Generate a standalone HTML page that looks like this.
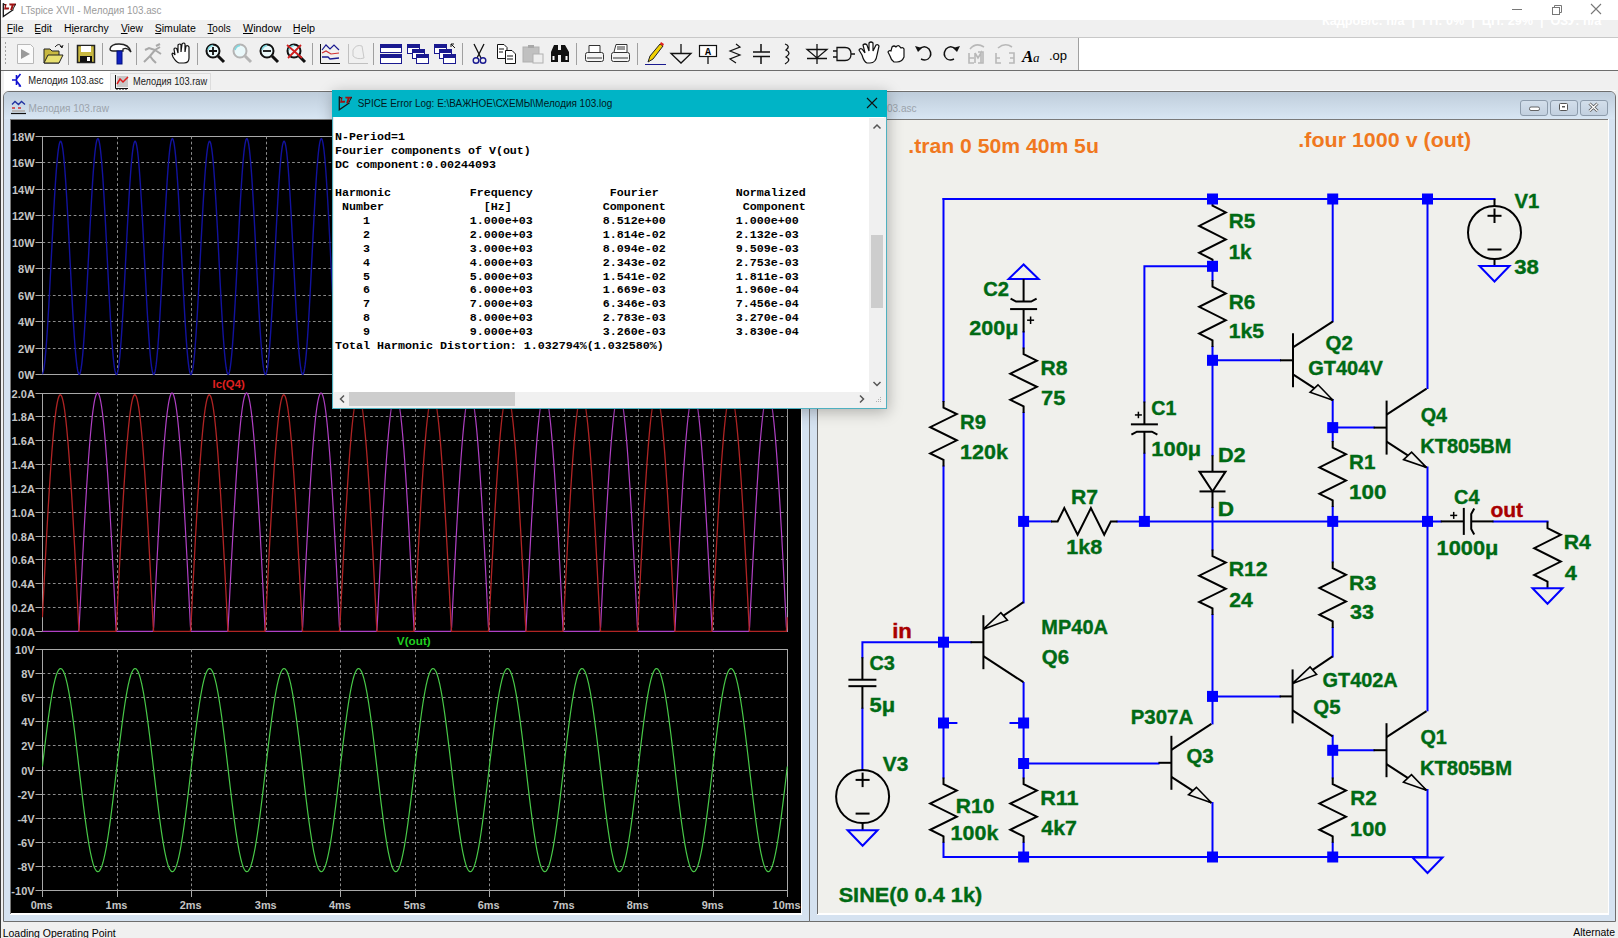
<!DOCTYPE html><html><head><meta charset="utf-8"><style>
html,body{margin:0;padding:0;}
body{width:1618px;height:938px;overflow:hidden;position:relative;background:#f0f0f0;font-family:"Liberation Sans", sans-serif;}
.a{position:absolute;}
svg{position:absolute;left:0;top:0;overflow:visible;}
</style></head><body>
<div class="a" style="left:0;top:0;width:1618px;height:20px;background:#fff"></div><div class="a" style="left:0;top:20px;width:1618px;height:18px;background:#f0f0f0"></div><div class="a" style="left:0;top:37px;width:1618px;height:1px;background:#c8c8c8"></div><svg width="1618" height="938" style="left:0;top:0;"><text transform="translate(20.65,13.85) scale(0.8550,1)" font-family="Liberation Sans" font-size="11.5" font-weight="normal" fill="#9a9a9a" >LTspice XVII - Мелодия 103.asc</text><g transform="translate(3,3) scale(1.0)"><path d="M0.3 0.3 V13.5 L10.5 6.5" fill="none" stroke="#151515" stroke-width="1.3"/><path d="M1.2 1 H3.6 L2.9 4.6 H6.2 L5.7 6.5 H1 L1.8 3.3 Z" fill="#a01010"/><path d="M6.2 0.6 H13 L12.5 2.4 H10.7 L9.2 7 H7.1 L8.6 2.4 H6.6 Z" fill="#a01010"/><path d="M0.5 0.5 L2.5 2.2 M10 6 L12.6 1" stroke="#151515" stroke-width="1"/></g><line x1="1512" y1="9.5" x2="1522" y2="9.5" stroke="#777" stroke-width="1"/>
<rect x="1552.5" y="7.5" width="7" height="7" fill="none" stroke="#777"/><path d="M1554.5 7.5 V5.5 H1561.5 V12.5 H1559.5" fill="none" stroke="#777"/>
<path d="M1591 4 L1601 14 M1601 4 L1591 14" stroke="#777" stroke-width="1.1"/><text transform="translate(1321.95,24.50) scale(0.9721,1)" font-family="Liberation Sans" font-size="13" font-weight="bold" fill="#ffffff" xml:space="preserve">Кадров/с: n/a  |  ГП: 0%  |  ЦП: 29%  |  ОЗУ: n/a</text><text transform="translate(6.67,31.65) scale(0.9466,1)" font-family="Liberation Sans" font-size="11" font-weight="normal" fill="#000" >File</text><rect x="7.5" y="33" width="5.1" height="1" fill="#000"/><text transform="translate(34.28,31.65) scale(0.9333,1)" font-family="Liberation Sans" font-size="11" font-weight="normal" fill="#000" >Edit</text><rect x="35.1" y="33" width="5.6" height="1" fill="#000"/><text transform="translate(63.97,31.65) scale(0.9514,1)" font-family="Liberation Sans" font-size="11" font-weight="normal" fill="#000" >Hierarchy</text><rect x="72.3" y="33" width="2.0" height="1" fill="#000"/><text transform="translate(120.90,31.65) scale(0.9263,1)" font-family="Liberation Sans" font-size="11" font-weight="normal" fill="#000" >View</text><rect x="120.9" y="33" width="6.7" height="1" fill="#000"/><text transform="translate(154.72,31.65) scale(0.9605,1)" font-family="Liberation Sans" font-size="11" font-weight="normal" fill="#000" >Simulate</text><rect x="155.2" y="33" width="6.1" height="1" fill="#000"/><text transform="translate(207.37,31.65) scale(0.9080,1)" font-family="Liberation Sans" font-size="11" font-weight="normal" fill="#000" >Tools</text><rect x="207.6" y="33" width="5.7" height="1" fill="#000"/><text transform="translate(243.00,31.65) scale(0.9815,1)" font-family="Liberation Sans" font-size="11" font-weight="normal" fill="#000" >Window</text><rect x="243.0" y="33" width="10.2" height="1" fill="#000"/><text transform="translate(292.84,31.65) scale(0.9871,1)" font-family="Liberation Sans" font-size="11" font-weight="normal" fill="#000" >Help</text><rect x="293.7" y="33" width="6.2" height="1" fill="#000"/></svg><div class="a" style="left:0;top:38px;width:1618px;height:32px;background:#f0f0f0"></div><div class="a" style="left:1079px;top:38px;width:539px;height:32px;background:#fff"></div><div class="a" style="left:1078px;top:38px;width:1px;height:32px;background:#a0a0a0"></div><div class="a" style="left:0;top:70px;width:1618px;height:1px;background:#6d6d6d"></div><svg width="1618" height="938" style="left:0;top:0;"><rect x="5" y="42" width="1" height="2" fill="#a0a0a0"/><rect x="5" y="46" width="1" height="2" fill="#a0a0a0"/><rect x="5" y="50" width="1" height="2" fill="#a0a0a0"/><rect x="5" y="54" width="1" height="2" fill="#a0a0a0"/><rect x="5" y="58" width="1" height="2" fill="#a0a0a0"/><rect x="5" y="62" width="1" height="2" fill="#a0a0a0"/><line x1="68.5" y1="43" x2="68.5" y2="65" stroke="#a0a0a0" stroke-width="1"/><line x1="102.5" y1="43" x2="102.5" y2="65" stroke="#a0a0a0" stroke-width="1"/><line x1="136.5" y1="43" x2="136.5" y2="65" stroke="#a0a0a0" stroke-width="1"/><line x1="197.5" y1="43" x2="197.5" y2="65" stroke="#a0a0a0" stroke-width="1"/><line x1="312.5" y1="43" x2="312.5" y2="65" stroke="#a0a0a0" stroke-width="1"/><line x1="373.5" y1="43" x2="373.5" y2="65" stroke="#a0a0a0" stroke-width="1"/><line x1="462.5" y1="43" x2="462.5" y2="65" stroke="#a0a0a0" stroke-width="1"/><line x1="576.5" y1="43" x2="576.5" y2="65" stroke="#a0a0a0" stroke-width="1"/><line x1="637.5" y1="43" x2="637.5" y2="65" stroke="#a0a0a0" stroke-width="1"/><path d="M17.5 44.5 H30.5 L33.5 47.5 V63.5 H17.5 Z" fill="#fafafa" stroke="#b8b8b8"/><path d="M21 49 L30 54 L21 59 Z" fill="#9a9a9a"/><path d="M44 49 H50 L52 51 H59 V63 H44 Z" fill="#c8b840" stroke="#222" stroke-width="1"/><path d="M44 63 L48 55 H63 L59 63 Z" fill="#e8e070" stroke="#222"/><path d="M55 47 Q59 42 62 47" fill="none" stroke="#222"/><path d="M60 46 L62 48 L63 45" fill="none" stroke="#222"/><rect x="77.5" y="45.5" width="17" height="17" fill="#c8b840" stroke="#222" stroke-width="1.5"/><rect x="81" y="46" width="10" height="6" fill="#fff"/><rect x="80" y="56" width="12" height="6" fill="#111"/><rect x="87" y="57" width="3" height="4" fill="#fff"/><path d="M110 49 Q111 44 119 44 Q129 44 131 52 Q127 47 123 49 L123 51 H113 Q110 51 110 49 Z" fill="#fff" stroke="#222" stroke-width="1.3"/><rect x="117" y="51" width="5" height="13" fill="#1020c0" stroke="#001080"/><path d="M144 62 L150 56 L153 60 L156 63 M150 56 L155 50 L160 47 M155 50 L149 48 L145 50 M155 50 L161 54 M156 46 L160 44" fill="none" stroke="#a8a8a8" stroke-width="2"/><path d="M175 55 L174 49 Q175 47 177 49 L178 53 L178 45 Q180 43 181 45 L181 52 L182 44 Q184 42 185 44 L185 52 L186 46 Q188 45 189 47 L189 58 Q189 63 184 63 L179 63 Q176 62 173 57 L172 54 Q173 52 175 55 Z" fill="#fff" stroke="#111" stroke-width="1.2"/><circle cx="213" cy="51" r="6.5" fill="#eaf8fa" stroke="#111" stroke-width="2"/><path d="M208 50 Q209 46 213 45.5" fill="none" stroke="#7fd8e0" stroke-width="1.5"/><line x1="218" y1="56" x2="224" y2="62" stroke="#111" stroke-width="3"/><path d="M209 51 H217 M213 47 V55" stroke="#111" stroke-width="1.8"/><circle cx="240" cy="51" r="6.5" fill="#eaf8fa" stroke="#b4b4b4" stroke-width="2"/><path d="M235 50 Q236 46 240 45.5" fill="none" stroke="#7fd8e0" stroke-width="1.5"/><line x1="245" y1="56" x2="251" y2="62" stroke="#b4b4b4" stroke-width="3"/><circle cx="267" cy="51" r="6.5" fill="#eaf8fa" stroke="#111" stroke-width="2"/><path d="M262 50 Q263 46 267 45.5" fill="none" stroke="#7fd8e0" stroke-width="1.5"/><line x1="272" y1="56" x2="278" y2="62" stroke="#111" stroke-width="3"/><path d="M263 51 H271" stroke="#111" stroke-width="1.8"/><circle cx="294" cy="51" r="6.5" fill="#eaf8fa" stroke="#111" stroke-width="2"/><path d="M289 50 Q290 46 294 45.5" fill="none" stroke="#7fd8e0" stroke-width="1.5"/><line x1="299" y1="56" x2="305" y2="62" stroke="#111" stroke-width="3"/><path d="M287 45 L302 58 M301 45 L288 58" stroke="#d02020" stroke-width="1.8"/><path d="M320.5 44 V63.5 H340" fill="none" stroke="#111"/><path d="M322 50 L326 45 L330 49 L334 45 L339 50" fill="none" stroke="#1a1a90" stroke-width="1.2"/><path d="M322 53 L326 51 L331 54 L339 53" fill="none" stroke="#d03030" stroke-width="1.2"/><path d="M322 57 L328 57 L330 59 L339 58" fill="none" stroke="#1a1a90" stroke-width="1.3"/><path d="M348.5 44 V63.5 H368" fill="none" stroke="#c0c0c0"/><path d="M353 50 Q356 44 362 46 L364 58 Q357 60 353 56 Z" fill="none" stroke="#c8c8c8"/><rect x="380.5" y="44.5" width="21" height="8" fill="#fff" stroke="#1a1a90"/><rect x="381" y="45" width="20" height="3" fill="#1a1a90"/><rect x="380.5" y="54.5" width="21" height="9" fill="#fff" stroke="#1a1a90"/><rect x="381" y="55" width="20" height="3" fill="#1a1a90"/><rect x="407.5" y="44.5" width="12" height="9" fill="#fff" stroke="#1a1a90"/><rect x="408" y="45" width="11" height="3" fill="#1a1a90"/><rect x="412.5" y="49.5" width="12" height="9" fill="#fff" stroke="#1a1a90"/><rect x="413" y="50" width="11" height="3" fill="#1a1a90"/><rect x="416.5" y="54.5" width="12" height="9" fill="#fff" stroke="#1a1a90"/><rect x="417" y="55" width="11" height="3" fill="#1a1a90"/><rect x="434.5" y="44.5" width="12" height="9" fill="#fff" stroke="#1a1a90"/><rect x="435" y="45" width="11" height="3" fill="#1a1a90"/><rect x="439.5" y="49.5" width="12" height="9" fill="#fff" stroke="#1a1a90"/><rect x="440" y="50" width="11" height="3" fill="#1a1a90"/><rect x="443.5" y="54.5" width="12" height="9" fill="#fff" stroke="#1a1a90"/><rect x="444" y="55" width="11" height="3" fill="#1a1a90"/><path d="M451 44 L455 48 M451 44 V47 M451 44 H454" stroke="#111" fill="none"/><path d="M474 44 L481 58 M484 44 L477 58" stroke="#111" stroke-width="1.3"/><circle cx="476" cy="60.5" r="2.8" fill="none" stroke="#1a1a90" stroke-width="1.4"/><circle cx="483" cy="60.5" r="2.8" fill="none" stroke="#1a1a90" stroke-width="1.4"/><path d="M497.5 44.5 H504 L507 47.5 V58.5 H497.5 Z" fill="#fff" stroke="#111"/><path d="M505.5 50.5 H512 L515.5 54 V63.5 H505.5 Z" fill="#fff" stroke="#111"/><path d="M499 49 H504 M499 52 H503 M507 56 H513 M507 59 H513" stroke="#111"/><rect x="523" y="47" width="16" height="15" fill="#c0c0c0" stroke="#b0b0b0"/><rect x="528" y="45" width="6" height="3" fill="#a8a8a8"/><rect x="533" y="54" width="10" height="9" fill="#eee" stroke="#b0b0b0"/><path d="M551 62 V52 L554 45 H558 V62 Z M561 62 V45 H565 L569 52 V62 Z" fill="#111"/><rect x="557" y="50" width="5" height="5" fill="#111"/><rect x="552.5" y="56" width="2" height="4" fill="#fff"/><rect x="565.5" y="56" width="2" height="4" fill="#fff"/><rect x="585.5" y="52.5" width="18" height="9" rx="2" fill="#f4f4f4" stroke="#333"/><path d="M589 52 V45.5 H600 V52" fill="#fff" stroke="#333"/><path d="M587 58 H602" stroke="#333"/><rect x="611.5" y="52.5" width="18" height="9" rx="2" fill="#f4f4f4" stroke="#333"/><path d="M614 52 L616 44.5 H627 L627 52" fill="#fff" stroke="#333"/><path d="M617 47 H625 M617 49 H625 M613 58 H628" stroke="#333"/><path d="M648 62 L650 56 L660 44 L663 46 L653 59 Z" fill="#f0d000" stroke="#222"/><path d="M660 44 L663 46 L664 44 L661 42 Z" fill="#e02020"/><line x1="645" y1="64.5" x2="666" y2="64.5" stroke="#1a1a90"/><path d="M681 44 V53 M671 53.5 H691 L681 63 Z" fill="none" stroke="#111" stroke-width="1.3"/><rect x="699.5" y="45.5" width="17" height="11" fill="#fff" stroke="#111" stroke-width="1.2"/><line x1="708" y1="57" x2="708" y2="64" stroke="#111" stroke-width="1.3"/><text x="708" y="55" font-size="10" font-weight="bold" text-anchor="middle" font-family="Liberation Mono">A</text><path d="M736 44 L740 47 L730 51 L740 55 L730 59 L736 63" fill="none" stroke="#111" stroke-width="1.2"/><path d="M761 44 V52 M753 52 H770 M753 56.5 H770 M761 57 V64" fill="none" stroke="#111" stroke-width="1.5"/><path d="M785 44 Q791 46 786 50 Q792 53 786 57 Q792 60 785 64" fill="none" stroke="#111" stroke-width="1.3"/><path d="M817 44 V64 M807 49.5 H827 L817 58 Z M807 58.5 H827" fill="none" stroke="#111" stroke-width="1.3"/><path d="M837 47.5 H845 Q851 47.5 851 54 Q851 60.5 845 60.5 H837 Z M833 51 H837 M833 57 H837 M851 54 H855" fill="none" stroke="#111" stroke-width="1.3"/><path d="M862 55 L859 50 Q860 48 862 49 L865 53 L863 45 Q865 43 867 45 L869 51 L869 43 Q871 41 873 43 L873 51 L876 45 Q878 44 879 46 L877 55 Q876 63 870 63 L867 63 Q864 62 862 55 Z" fill="#fff" stroke="#111" stroke-width="1.2"/><path d="M890 56 L888 52 Q889 50 891 51 L892 47 Q894 45 896 47 L897 46 Q899 45 900 47 L901 48 Q903 47 904 49 L904 57 Q902 62 897 62 L894 62 Q891 60 890 56 Z" fill="#fff" stroke="#111" stroke-width="1.2"/><path d="M918 50 Q924 44 929 49 Q933 55 928 59 Q925 61 921 59" fill="none" stroke="#111" stroke-width="1.4"/><path d="M915 46 L918 52 L922 48 Z" fill="#111"/><path d="M957 50 Q951 44 946 49 Q942 55 947 59 Q950 61 954 59" fill="none" stroke="#111" stroke-width="1.4"/><path d="M960 46 L957 52 L953 48 Z" fill="#111"/><path d="M969 53 V63 H974 M969 58 H974 M975 53 V63 M975 53 L978 58 L981 53 V63 M978 52 H983 V63 H978 M970 49 Q976 42 984 47" fill="none" stroke="#b8b8b8" stroke-width="1.6"/><path d="M996 53 V63 H1001 M996 58 H1000 M1009 53 H1014 V63 H1009 M1010 58 H1014 M998 48 Q1005 42 1012 47" fill="none" stroke="#b8b8b8" stroke-width="1.6"/><text x="1022" y="62" font-size="17" font-style="italic" font-weight="bold" font-family="Liberation Serif">A</text><text x="1033" y="62" font-size="13" font-style="italic" font-family="Liberation Serif">a</text><text x="1049" y="60" font-size="13" font-family="Liberation Sans">.op</text></svg><div class="a" style="left:4px;top:71px;width:106px;height:20px;background:#fff"></div><div class="a" style="left:110px;top:73px;width:101px;height:18px;background:#f2f2f2;border:1px solid #dcdcdc;border-bottom:none;box-sizing:border-box"></div><svg width="1618" height="938" style="left:0;top:0;"><text transform="translate(28.35,84.30) scale(0.8590,1)" font-family="Liberation Sans" font-size="11" font-weight="normal" fill="#1a1a1a" >Мелодия 103.asc</text><text transform="translate(132.96,85.20) scale(0.8412,1)" font-family="Liberation Sans" font-size="11" font-weight="normal" fill="#1a1a1a" >Мелодия 103.raw</text><path d="M12 80 H16 M16.5 75 L16.5 85 M16.5 79 L20.5 74 M16.5 81 L20.5 86" fill="none" stroke="#1010d0" stroke-width="1.6"/><path d="M19 84 L21.5 87 L18.5 86.5 Z" fill="#1010d0"/>
<path d="M115.5 75 V88.5 H128" fill="none" stroke="#111"/><rect x="117" y="76" width="11" height="11" fill="#c8c8c8"/><path d="M117 84 L120 79 L123 82 L128 77" fill="none" stroke="#e02020" stroke-width="1.5"/>
<path d="M117 90 V88 M120 90 V88 M123 90 V88 M126 90 V88" stroke="#111"/></svg><div class="a" style="left:809px;top:91px;width:807px;height:831px;background:#d5e2f0;border:1px solid #6e6e6e;box-sizing:border-box;border-radius:6px 6px 0 0"></div><div class="a" style="left:810px;top:92px;width:805px;height:27px;background:linear-gradient(#bfcddb,#d8e6f3);border-radius:5px 5px 0 0"></div><div class="a" style="left:3px;top:91px;width:807px;height:831px;background:#d5e2f0;border:1px solid #6e6e6e;box-sizing:border-box;border-radius:6px 6px 0 0"></div><div class="a" style="left:4px;top:92px;width:805px;height:27px;background:linear-gradient(#bfcddb,#d8e6f3);border-radius:5px 5px 0 0"></div><div class="a" style="left:4px;top:90px;width:1612px;height:1px;background:#fafafa"></div><svg width="1618" height="938" style="left:0;top:0;"><text transform="translate(28.54,111.70) scale(0.8722,1)" font-family="Liberation Sans" font-size="11.5" font-weight="normal" fill="#9ba3ab" >Мелодия 103.raw</text><text transform="translate(836.54,111.70) scale(0.8741,1)" font-family="Liberation Sans" font-size="11.5" font-weight="normal" fill="#9ba3ab" >Мелодия 103.asc</text><path d="M12 104.5 L15 101.5 L18.5 104.5 L21.5 101.5 L25 104.5" fill="none" stroke="#2030a0" stroke-width="1.3"/>
<path d="M12 108 H15 M18 108 H21" stroke="#d03030" stroke-width="1.3"/><rect x="12" y="110" width="13" height="2" fill="#b8b8b8"/><line x1="11" y1="113.5" x2="26" y2="113.5" stroke="#111" stroke-width="1.2"/></svg><div class="a" style="left:10px;top:119px;width:792px;height:796px;background:#fff"></div><div class="a" style="left:10px;top:119px;width:792px;height:1px;background:#7a7a7a"></div><div class="a" style="left:10px;top:119px;width:1px;height:795px;background:#7a7a7a"></div><div class="a" style="left:11px;top:120px;width:790px;height:793px;background:#000"></div><div class="a" style="left:817px;top:119px;width:792px;height:796px;background:#fff"></div><div class="a" style="left:817px;top:119px;width:791px;height:1px;background:#7a7a7a"></div><div class="a" style="left:817px;top:119px;width:1px;height:795px;background:#6a6a6a"></div><div class="a" style="left:818px;top:120px;width:790px;height:793px;background:#f0f0ec"></div><div class="a" style="left:1520px;top:100px;width:28px;height:16px;border:1px solid #8d9cac;border-radius:3px;background:linear-gradient(#d3dfeb,#c2d0df);box-sizing:border-box"></div><div class="a" style="left:1550px;top:100px;width:28px;height:16px;border:1px solid #8d9cac;border-radius:3px;background:linear-gradient(#d3dfeb,#c2d0df);box-sizing:border-box"></div><div class="a" style="left:1580px;top:100px;width:28px;height:16px;border:1px solid #8d9cac;border-radius:3px;background:linear-gradient(#d3dfeb,#c2d0df);box-sizing:border-box"></div><svg width="1618" height="938" style="left:0;top:0;"><rect x="1529.5" y="107" width="10" height="3.5" rx="1.5" fill="#fff" stroke="#555" stroke-width="0.9"/>
<rect x="1559.5" y="103.5" width="8" height="7" rx="1" fill="#fff" stroke="#555" stroke-width="1"/><rect x="1562" y="106" width="3" height="1.5" fill="#555"/>
<path d="M1589.5 103.5 L1597.5 111 M1597.5 103.5 L1589.5 111" stroke="#555" stroke-width="3"/><path d="M1589.5 103.5 L1597.5 111 M1597.5 103.5 L1589.5 111" stroke="#fff" stroke-width="1.3"/></svg><div class="a" style="left:0;top:922px;width:1618px;height:16px;background:#f0f0f0"></div><svg width="1618" height="938" style="left:0;top:0;"><text transform="translate(2.67,936.80) scale(0.9529,1)" font-family="Liberation Sans" font-size="11" font-weight="normal" fill="#000" >Loading Operating Point</text><text transform="translate(1573.30,936.30) scale(0.9471,1)" font-family="Liberation Sans" font-size="11" font-weight="normal" fill="#000" >Alternate</text></svg><svg width="1618" height="938" style="left:0;top:0;"><rect x="42.5" y="136.5" width="745.0" height="238.0" fill="none" stroke="#a8a8a8" stroke-width="1"/><line x1="42.5" y1="162.5" x2="787.5" y2="162.5" stroke="#8c8c8c" stroke-width="1" stroke-dasharray="2.7,2.5"/><line x1="42.5" y1="189.5" x2="787.5" y2="189.5" stroke="#8c8c8c" stroke-width="1" stroke-dasharray="2.7,2.5"/><line x1="42.5" y1="215.5" x2="787.5" y2="215.5" stroke="#8c8c8c" stroke-width="1" stroke-dasharray="2.7,2.5"/><line x1="42.5" y1="242.5" x2="787.5" y2="242.5" stroke="#8c8c8c" stroke-width="1" stroke-dasharray="2.7,2.5"/><line x1="42.5" y1="268.5" x2="787.5" y2="268.5" stroke="#8c8c8c" stroke-width="1" stroke-dasharray="2.7,2.5"/><line x1="42.5" y1="295.5" x2="787.5" y2="295.5" stroke="#8c8c8c" stroke-width="1" stroke-dasharray="2.7,2.5"/><line x1="42.5" y1="321.5" x2="787.5" y2="321.5" stroke="#8c8c8c" stroke-width="1" stroke-dasharray="2.7,2.5"/><line x1="42.5" y1="348.5" x2="787.5" y2="348.5" stroke="#8c8c8c" stroke-width="1" stroke-dasharray="2.7,2.5"/><line x1="117.5" y1="136.5" x2="117.5" y2="374.5" stroke="#8c8c8c" stroke-width="1" stroke-dasharray="2.7,2.5"/><line x1="191.5" y1="136.5" x2="191.5" y2="374.5" stroke="#8c8c8c" stroke-width="1" stroke-dasharray="2.7,2.5"/><line x1="266.5" y1="136.5" x2="266.5" y2="374.5" stroke="#8c8c8c" stroke-width="1" stroke-dasharray="2.7,2.5"/><line x1="340.5" y1="136.5" x2="340.5" y2="374.5" stroke="#8c8c8c" stroke-width="1" stroke-dasharray="2.7,2.5"/><line x1="415.5" y1="136.5" x2="415.5" y2="374.5" stroke="#8c8c8c" stroke-width="1" stroke-dasharray="2.7,2.5"/><line x1="489.5" y1="136.5" x2="489.5" y2="374.5" stroke="#8c8c8c" stroke-width="1" stroke-dasharray="2.7,2.5"/><line x1="564.5" y1="136.5" x2="564.5" y2="374.5" stroke="#8c8c8c" stroke-width="1" stroke-dasharray="2.7,2.5"/><line x1="638.5" y1="136.5" x2="638.5" y2="374.5" stroke="#8c8c8c" stroke-width="1" stroke-dasharray="2.7,2.5"/><line x1="713.5" y1="136.5" x2="713.5" y2="374.5" stroke="#8c8c8c" stroke-width="1" stroke-dasharray="2.7,2.5"/><line x1="35.5" y1="136.5" x2="42.5" y2="136.5" stroke="#a8a8a8" stroke-width="1"/><text transform="translate(11.92,140.50) scale(0.9600,1)" font-family="Liberation Sans" font-size="11.5" font-weight="bold" fill="#c4c4c4" >18W</text><line x1="35.5" y1="162.5" x2="42.5" y2="162.5" stroke="#a8a8a8" stroke-width="1"/><text transform="translate(11.92,166.50) scale(0.9600,1)" font-family="Liberation Sans" font-size="11.5" font-weight="bold" fill="#c4c4c4" >16W</text><line x1="35.5" y1="189.5" x2="42.5" y2="189.5" stroke="#a8a8a8" stroke-width="1"/><text transform="translate(11.92,193.50) scale(0.9600,1)" font-family="Liberation Sans" font-size="11.5" font-weight="bold" fill="#c4c4c4" >14W</text><line x1="35.5" y1="215.5" x2="42.5" y2="215.5" stroke="#a8a8a8" stroke-width="1"/><text transform="translate(11.92,219.50) scale(0.9600,1)" font-family="Liberation Sans" font-size="11.5" font-weight="bold" fill="#c4c4c4" >12W</text><line x1="35.5" y1="242.5" x2="42.5" y2="242.5" stroke="#a8a8a8" stroke-width="1"/><text transform="translate(11.92,246.50) scale(0.9600,1)" font-family="Liberation Sans" font-size="11.5" font-weight="bold" fill="#c4c4c4" >10W</text><line x1="35.5" y1="268.5" x2="42.5" y2="268.5" stroke="#a8a8a8" stroke-width="1"/><text transform="translate(18.04,272.50) scale(0.9600,1)" font-family="Liberation Sans" font-size="11.5" font-weight="bold" fill="#c4c4c4" >8W</text><line x1="35.5" y1="295.5" x2="42.5" y2="295.5" stroke="#a8a8a8" stroke-width="1"/><text transform="translate(18.04,299.50) scale(0.9600,1)" font-family="Liberation Sans" font-size="11.5" font-weight="bold" fill="#c4c4c4" >6W</text><line x1="35.5" y1="321.5" x2="42.5" y2="321.5" stroke="#a8a8a8" stroke-width="1"/><text transform="translate(18.04,325.50) scale(0.9600,1)" font-family="Liberation Sans" font-size="11.5" font-weight="bold" fill="#c4c4c4" >4W</text><line x1="35.5" y1="348.5" x2="42.5" y2="348.5" stroke="#a8a8a8" stroke-width="1"/><text transform="translate(18.04,352.50) scale(0.9600,1)" font-family="Liberation Sans" font-size="11.5" font-weight="bold" fill="#c4c4c4" >2W</text><line x1="35.5" y1="374.5" x2="42.5" y2="374.5" stroke="#a8a8a8" stroke-width="1"/><text transform="translate(18.04,378.50) scale(0.9600,1)" font-family="Liberation Sans" font-size="11.5" font-weight="bold" fill="#c4c4c4" >0W</text><rect x="42.5" y="393.5" width="745.0" height="238.0" fill="none" stroke="#a8a8a8" stroke-width="1"/><line x1="42.5" y1="416.5" x2="787.5" y2="416.5" stroke="#8c8c8c" stroke-width="1" stroke-dasharray="2.7,2.5"/><line x1="42.5" y1="440.5" x2="787.5" y2="440.5" stroke="#8c8c8c" stroke-width="1" stroke-dasharray="2.7,2.5"/><line x1="42.5" y1="464.5" x2="787.5" y2="464.5" stroke="#8c8c8c" stroke-width="1" stroke-dasharray="2.7,2.5"/><line x1="42.5" y1="488.5" x2="787.5" y2="488.5" stroke="#8c8c8c" stroke-width="1" stroke-dasharray="2.7,2.5"/><line x1="42.5" y1="512.5" x2="787.5" y2="512.5" stroke="#8c8c8c" stroke-width="1" stroke-dasharray="2.7,2.5"/><line x1="42.5" y1="536.5" x2="787.5" y2="536.5" stroke="#8c8c8c" stroke-width="1" stroke-dasharray="2.7,2.5"/><line x1="42.5" y1="559.5" x2="787.5" y2="559.5" stroke="#8c8c8c" stroke-width="1" stroke-dasharray="2.7,2.5"/><line x1="42.5" y1="583.5" x2="787.5" y2="583.5" stroke="#8c8c8c" stroke-width="1" stroke-dasharray="2.7,2.5"/><line x1="42.5" y1="607.5" x2="787.5" y2="607.5" stroke="#8c8c8c" stroke-width="1" stroke-dasharray="2.7,2.5"/><line x1="117.5" y1="393.5" x2="117.5" y2="631.5" stroke="#8c8c8c" stroke-width="1" stroke-dasharray="2.7,2.5"/><line x1="191.5" y1="393.5" x2="191.5" y2="631.5" stroke="#8c8c8c" stroke-width="1" stroke-dasharray="2.7,2.5"/><line x1="266.5" y1="393.5" x2="266.5" y2="631.5" stroke="#8c8c8c" stroke-width="1" stroke-dasharray="2.7,2.5"/><line x1="340.5" y1="393.5" x2="340.5" y2="631.5" stroke="#8c8c8c" stroke-width="1" stroke-dasharray="2.7,2.5"/><line x1="415.5" y1="393.5" x2="415.5" y2="631.5" stroke="#8c8c8c" stroke-width="1" stroke-dasharray="2.7,2.5"/><line x1="489.5" y1="393.5" x2="489.5" y2="631.5" stroke="#8c8c8c" stroke-width="1" stroke-dasharray="2.7,2.5"/><line x1="564.5" y1="393.5" x2="564.5" y2="631.5" stroke="#8c8c8c" stroke-width="1" stroke-dasharray="2.7,2.5"/><line x1="638.5" y1="393.5" x2="638.5" y2="631.5" stroke="#8c8c8c" stroke-width="1" stroke-dasharray="2.7,2.5"/><line x1="713.5" y1="393.5" x2="713.5" y2="631.5" stroke="#8c8c8c" stroke-width="1" stroke-dasharray="2.7,2.5"/><line x1="35.5" y1="393.5" x2="42.5" y2="393.5" stroke="#a8a8a8" stroke-width="1"/><text transform="translate(11.56,397.50) scale(0.9600,1)" font-family="Liberation Sans" font-size="11.5" font-weight="bold" fill="#c4c4c4" >2.0A</text><line x1="35.5" y1="416.5" x2="42.5" y2="416.5" stroke="#a8a8a8" stroke-width="1"/><text transform="translate(11.56,420.50) scale(0.9600,1)" font-family="Liberation Sans" font-size="11.5" font-weight="bold" fill="#c4c4c4" >1.8A</text><line x1="35.5" y1="440.5" x2="42.5" y2="440.5" stroke="#a8a8a8" stroke-width="1"/><text transform="translate(11.56,444.50) scale(0.9600,1)" font-family="Liberation Sans" font-size="11.5" font-weight="bold" fill="#c4c4c4" >1.6A</text><line x1="35.5" y1="464.5" x2="42.5" y2="464.5" stroke="#a8a8a8" stroke-width="1"/><text transform="translate(11.56,468.50) scale(0.9600,1)" font-family="Liberation Sans" font-size="11.5" font-weight="bold" fill="#c4c4c4" >1.4A</text><line x1="35.5" y1="488.5" x2="42.5" y2="488.5" stroke="#a8a8a8" stroke-width="1"/><text transform="translate(11.56,492.50) scale(0.9600,1)" font-family="Liberation Sans" font-size="11.5" font-weight="bold" fill="#c4c4c4" >1.2A</text><line x1="35.5" y1="512.5" x2="42.5" y2="512.5" stroke="#a8a8a8" stroke-width="1"/><text transform="translate(11.56,516.50) scale(0.9600,1)" font-family="Liberation Sans" font-size="11.5" font-weight="bold" fill="#c4c4c4" >1.0A</text><line x1="35.5" y1="536.5" x2="42.5" y2="536.5" stroke="#a8a8a8" stroke-width="1"/><text transform="translate(11.56,540.50) scale(0.9600,1)" font-family="Liberation Sans" font-size="11.5" font-weight="bold" fill="#c4c4c4" >0.8A</text><line x1="35.5" y1="559.5" x2="42.5" y2="559.5" stroke="#a8a8a8" stroke-width="1"/><text transform="translate(11.56,563.50) scale(0.9600,1)" font-family="Liberation Sans" font-size="11.5" font-weight="bold" fill="#c4c4c4" >0.6A</text><line x1="35.5" y1="583.5" x2="42.5" y2="583.5" stroke="#a8a8a8" stroke-width="1"/><text transform="translate(11.56,587.50) scale(0.9600,1)" font-family="Liberation Sans" font-size="11.5" font-weight="bold" fill="#c4c4c4" >0.4A</text><line x1="35.5" y1="607.5" x2="42.5" y2="607.5" stroke="#a8a8a8" stroke-width="1"/><text transform="translate(11.56,611.50) scale(0.9600,1)" font-family="Liberation Sans" font-size="11.5" font-weight="bold" fill="#c4c4c4" >0.2A</text><line x1="35.5" y1="631.5" x2="42.5" y2="631.5" stroke="#a8a8a8" stroke-width="1"/><text transform="translate(11.56,635.50) scale(0.9600,1)" font-family="Liberation Sans" font-size="11.5" font-weight="bold" fill="#c4c4c4" >0.0A</text><rect x="42.5" y="649.5" width="745.0" height="241.0" fill="none" stroke="#a8a8a8" stroke-width="1"/><line x1="42.5" y1="673.5" x2="787.5" y2="673.5" stroke="#8c8c8c" stroke-width="1" stroke-dasharray="2.7,2.5"/><line x1="42.5" y1="697.5" x2="787.5" y2="697.5" stroke="#8c8c8c" stroke-width="1" stroke-dasharray="2.7,2.5"/><line x1="42.5" y1="721.5" x2="787.5" y2="721.5" stroke="#8c8c8c" stroke-width="1" stroke-dasharray="2.7,2.5"/><line x1="42.5" y1="745.5" x2="787.5" y2="745.5" stroke="#8c8c8c" stroke-width="1" stroke-dasharray="2.7,2.5"/><line x1="42.5" y1="770.5" x2="787.5" y2="770.5" stroke="#8c8c8c" stroke-width="1" stroke-dasharray="2.7,2.5"/><line x1="42.5" y1="794.5" x2="787.5" y2="794.5" stroke="#8c8c8c" stroke-width="1" stroke-dasharray="2.7,2.5"/><line x1="42.5" y1="818.5" x2="787.5" y2="818.5" stroke="#8c8c8c" stroke-width="1" stroke-dasharray="2.7,2.5"/><line x1="42.5" y1="842.5" x2="787.5" y2="842.5" stroke="#8c8c8c" stroke-width="1" stroke-dasharray="2.7,2.5"/><line x1="42.5" y1="866.5" x2="787.5" y2="866.5" stroke="#8c8c8c" stroke-width="1" stroke-dasharray="2.7,2.5"/><line x1="117.5" y1="649.5" x2="117.5" y2="890.5" stroke="#8c8c8c" stroke-width="1" stroke-dasharray="2.7,2.5"/><line x1="191.5" y1="649.5" x2="191.5" y2="890.5" stroke="#8c8c8c" stroke-width="1" stroke-dasharray="2.7,2.5"/><line x1="266.5" y1="649.5" x2="266.5" y2="890.5" stroke="#8c8c8c" stroke-width="1" stroke-dasharray="2.7,2.5"/><line x1="340.5" y1="649.5" x2="340.5" y2="890.5" stroke="#8c8c8c" stroke-width="1" stroke-dasharray="2.7,2.5"/><line x1="415.5" y1="649.5" x2="415.5" y2="890.5" stroke="#8c8c8c" stroke-width="1" stroke-dasharray="2.7,2.5"/><line x1="489.5" y1="649.5" x2="489.5" y2="890.5" stroke="#8c8c8c" stroke-width="1" stroke-dasharray="2.7,2.5"/><line x1="564.5" y1="649.5" x2="564.5" y2="890.5" stroke="#8c8c8c" stroke-width="1" stroke-dasharray="2.7,2.5"/><line x1="638.5" y1="649.5" x2="638.5" y2="890.5" stroke="#8c8c8c" stroke-width="1" stroke-dasharray="2.7,2.5"/><line x1="713.5" y1="649.5" x2="713.5" y2="890.5" stroke="#8c8c8c" stroke-width="1" stroke-dasharray="2.7,2.5"/><line x1="35.5" y1="649.5" x2="42.5" y2="649.5" stroke="#a8a8a8" stroke-width="1"/><text transform="translate(15.04,653.50) scale(0.9600,1)" font-family="Liberation Sans" font-size="11.5" font-weight="bold" fill="#c4c4c4" >10V</text><line x1="35.5" y1="673.5" x2="42.5" y2="673.5" stroke="#a8a8a8" stroke-width="1"/><text transform="translate(21.16,677.50) scale(0.9600,1)" font-family="Liberation Sans" font-size="11.5" font-weight="bold" fill="#c4c4c4" >8V</text><line x1="35.5" y1="697.5" x2="42.5" y2="697.5" stroke="#a8a8a8" stroke-width="1"/><text transform="translate(21.16,701.50) scale(0.9600,1)" font-family="Liberation Sans" font-size="11.5" font-weight="bold" fill="#c4c4c4" >6V</text><line x1="35.5" y1="721.5" x2="42.5" y2="721.5" stroke="#a8a8a8" stroke-width="1"/><text transform="translate(21.16,725.50) scale(0.9600,1)" font-family="Liberation Sans" font-size="11.5" font-weight="bold" fill="#c4c4c4" >4V</text><line x1="35.5" y1="745.5" x2="42.5" y2="745.5" stroke="#a8a8a8" stroke-width="1"/><text transform="translate(21.16,749.50) scale(0.9600,1)" font-family="Liberation Sans" font-size="11.5" font-weight="bold" fill="#c4c4c4" >2V</text><line x1="35.5" y1="770.5" x2="42.5" y2="770.5" stroke="#a8a8a8" stroke-width="1"/><text transform="translate(21.16,774.50) scale(0.9600,1)" font-family="Liberation Sans" font-size="11.5" font-weight="bold" fill="#c4c4c4" >0V</text><line x1="35.5" y1="794.5" x2="42.5" y2="794.5" stroke="#a8a8a8" stroke-width="1"/><text transform="translate(17.44,798.50) scale(0.9600,1)" font-family="Liberation Sans" font-size="11.5" font-weight="bold" fill="#c4c4c4" >-2V</text><line x1="35.5" y1="818.5" x2="42.5" y2="818.5" stroke="#a8a8a8" stroke-width="1"/><text transform="translate(17.44,822.50) scale(0.9600,1)" font-family="Liberation Sans" font-size="11.5" font-weight="bold" fill="#c4c4c4" >-4V</text><line x1="35.5" y1="842.5" x2="42.5" y2="842.5" stroke="#a8a8a8" stroke-width="1"/><text transform="translate(17.44,846.50) scale(0.9600,1)" font-family="Liberation Sans" font-size="11.5" font-weight="bold" fill="#c4c4c4" >-6V</text><line x1="35.5" y1="866.5" x2="42.5" y2="866.5" stroke="#a8a8a8" stroke-width="1"/><text transform="translate(17.44,870.50) scale(0.9600,1)" font-family="Liberation Sans" font-size="11.5" font-weight="bold" fill="#c4c4c4" >-8V</text><line x1="35.5" y1="890.5" x2="42.5" y2="890.5" stroke="#a8a8a8" stroke-width="1"/><text transform="translate(11.32,894.50) scale(0.9600,1)" font-family="Liberation Sans" font-size="11.5" font-weight="bold" fill="#c4c4c4" >-10V</text><line x1="42.5" y1="890.5" x2="42.5" y2="897" stroke="#a8a8a8" stroke-width="1"/><text transform="translate(30.78,908.70) scale(0.9500,1)" font-family="Liberation Sans" font-size="11.5" font-weight="bold" fill="#c4c4c4" >0ms</text><line x1="117.5" y1="890.5" x2="117.5" y2="897" stroke="#a8a8a8" stroke-width="1"/><text transform="translate(105.60,908.70) scale(0.9500,1)" font-family="Liberation Sans" font-size="11.5" font-weight="bold" fill="#c4c4c4" >1ms</text><line x1="191.5" y1="890.5" x2="191.5" y2="897" stroke="#a8a8a8" stroke-width="1"/><text transform="translate(179.77,908.70) scale(0.9500,1)" font-family="Liberation Sans" font-size="11.5" font-weight="bold" fill="#c4c4c4" >2ms</text><line x1="266.5" y1="890.5" x2="266.5" y2="897" stroke="#a8a8a8" stroke-width="1"/><text transform="translate(254.83,908.70) scale(0.9500,1)" font-family="Liberation Sans" font-size="11.5" font-weight="bold" fill="#c4c4c4" >3ms</text><line x1="340.5" y1="890.5" x2="340.5" y2="897" stroke="#a8a8a8" stroke-width="1"/><text transform="translate(328.89,908.70) scale(0.9500,1)" font-family="Liberation Sans" font-size="11.5" font-weight="bold" fill="#c4c4c4" >4ms</text><line x1="415.5" y1="890.5" x2="415.5" y2="897" stroke="#a8a8a8" stroke-width="1"/><text transform="translate(403.77,908.70) scale(0.9500,1)" font-family="Liberation Sans" font-size="11.5" font-weight="bold" fill="#c4c4c4" >5ms</text><line x1="489.5" y1="890.5" x2="489.5" y2="897" stroke="#a8a8a8" stroke-width="1"/><text transform="translate(477.77,908.70) scale(0.9500,1)" font-family="Liberation Sans" font-size="11.5" font-weight="bold" fill="#c4c4c4" >6ms</text><line x1="564.5" y1="890.5" x2="564.5" y2="897" stroke="#a8a8a8" stroke-width="1"/><text transform="translate(552.72,908.70) scale(0.9500,1)" font-family="Liberation Sans" font-size="11.5" font-weight="bold" fill="#c4c4c4" >7ms</text><line x1="638.5" y1="890.5" x2="638.5" y2="897" stroke="#a8a8a8" stroke-width="1"/><text transform="translate(626.78,908.70) scale(0.9500,1)" font-family="Liberation Sans" font-size="11.5" font-weight="bold" fill="#c4c4c4" >8ms</text><line x1="713.5" y1="890.5" x2="713.5" y2="897" stroke="#a8a8a8" stroke-width="1"/><text transform="translate(701.78,908.70) scale(0.9500,1)" font-family="Liberation Sans" font-size="11.5" font-weight="bold" fill="#c4c4c4" >9ms</text><line x1="787.5" y1="890.5" x2="787.5" y2="897" stroke="#a8a8a8" stroke-width="1"/><text transform="translate(772.57,908.70) scale(0.9500,1)" font-family="Liberation Sans" font-size="11.5" font-weight="bold" fill="#c4c4c4" >10ms</text><clipPath id="pc1"><rect x="42" y="130" width="746" height="246"/></clipPath><clipPath id="pc2"><rect x="42" y="388" width="746" height="245"/></clipPath><clipPath id="pc3"><rect x="42" y="645" width="746" height="247"/></clipPath><g clip-path="url(#pc1)"><polyline points="42.40,374.21 42.90,373.12 43.39,371.22 43.89,368.53 44.39,365.06 44.88,360.84 45.38,355.90 45.88,350.26 46.37,343.98 46.87,337.10 47.37,329.66 47.86,321.72 48.36,313.33 48.86,304.55 49.35,295.44 49.85,286.07 50.35,276.50 50.84,266.81 51.34,257.04 51.84,247.29 52.33,237.61 52.83,228.07 53.33,218.74 53.82,209.68 54.32,200.97 54.81,192.65 55.31,184.79 55.81,177.44 56.30,170.66 56.80,164.49 57.30,158.97 57.79,154.15 58.29,150.05 58.79,146.71 59.28,144.15 59.78,142.39 60.28,141.44 60.77,141.31 61.27,141.99 61.77,143.49 62.26,145.78 62.76,148.87 63.26,152.72 63.75,157.30 64.25,162.60 64.75,168.56 65.24,175.15 65.74,182.31 66.24,190.01 66.73,198.18 67.23,206.78 67.73,215.73 68.22,224.97 68.72,234.45 69.22,244.09 69.71,253.83 70.21,263.60 70.71,273.33 71.20,282.94 71.70,292.39 72.20,301.59 72.69,310.48 73.19,319.01 73.69,327.10 74.18,334.71 74.68,341.78 75.18,348.27 75.67,354.12 76.17,359.29 76.67,363.75 77.16,367.47 77.66,370.43 78.16,372.59 78.65,373.95 79.15,374.49 79.64,374.21 80.14,373.11 80.64,371.19 81.13,368.46 81.63,364.95 82.13,360.68 82.62,355.68 83.12,349.99 83.62,343.64 84.11,336.68 84.61,329.15 85.11,321.12 85.60,312.63 86.10,303.76 86.60,294.55 87.09,285.07 87.59,275.39 88.09,265.58 88.58,255.71 89.08,245.85 89.58,236.06 90.07,226.41 90.57,216.97 91.07,207.82 91.56,199.00 92.06,190.59 92.56,182.64 93.05,175.21 93.55,168.35 94.05,162.10 94.54,156.53 95.04,151.65 95.54,147.51 96.03,144.13 96.53,141.54 97.03,139.76 97.52,138.80 98.02,138.66 98.52,139.35 99.01,140.87 99.51,143.19 100.01,146.31 100.50,150.20 101.00,154.84 101.50,160.19 101.99,166.22 102.49,172.88 102.99,180.13 103.48,187.92 103.98,196.19 104.47,204.88 104.97,213.93 105.47,223.28 105.96,232.86 106.46,242.61 106.96,252.46 107.45,262.34 107.95,272.18 108.45,281.91 108.94,291.46 109.44,300.76 109.94,309.75 110.43,318.38 110.93,326.56 111.43,334.26 111.92,341.41 112.42,347.97 112.92,353.89 113.41,359.12 113.91,363.63 114.41,367.39 114.90,370.38 115.40,372.57 115.90,373.94 116.39,374.49 116.89,374.21 117.39,373.12 117.88,371.22 118.38,368.53 118.88,365.06 119.37,360.84 119.87,355.90 120.37,350.26 120.86,343.98 121.36,337.10 121.86,329.66 122.35,321.72 122.85,313.33 123.35,304.55 123.84,295.44 124.34,286.07 124.84,276.50 125.33,266.81 125.83,257.04 126.33,247.29 126.82,237.61 127.32,228.07 127.82,218.74 128.31,209.68 128.81,200.97 129.31,192.65 129.80,184.79 130.30,177.44 130.79,170.66 131.29,164.49 131.79,158.97 132.28,154.15 132.78,150.05 133.28,146.71 133.77,144.15 134.27,142.39 134.77,141.44 135.26,141.31 135.76,141.99 136.26,143.49 136.75,145.78 137.25,148.87 137.75,152.72 138.24,157.30 138.74,162.60 139.24,168.56 139.73,175.15 140.23,182.31 140.73,190.01 141.22,198.18 141.72,206.78 142.22,215.73 142.71,224.97 143.21,234.45 143.71,244.09 144.20,253.83 144.70,263.60 145.20,273.33 145.69,282.94 146.19,292.39 146.69,301.59 147.18,310.48 147.68,319.01 148.18,327.10 148.67,334.71 149.17,341.78 149.67,348.27 150.16,354.12 150.66,359.29 151.16,363.75 151.65,367.47 152.15,370.43 152.65,372.59 153.14,373.95 153.64,374.49 154.13,374.21 154.63,373.11 155.13,371.19 155.62,368.46 156.12,364.95 156.62,360.68 157.11,355.68 157.61,349.99 158.11,343.64 158.60,336.68 159.10,329.15 159.60,321.12 160.09,312.63 160.59,303.76 161.09,294.55 161.58,285.07 162.08,275.39 162.58,265.58 163.07,255.71 163.57,245.85 164.07,236.06 164.56,226.41 165.06,216.97 165.56,207.82 166.05,199.00 166.55,190.59 167.05,182.64 167.54,175.21 168.04,168.35 168.54,162.10 169.03,156.53 169.53,151.65 170.03,147.51 170.52,144.13 171.02,141.54 171.52,139.76 172.01,138.80 172.51,138.66 173.01,139.35 173.50,140.87 174.00,143.19 174.50,146.31 174.99,150.20 175.49,154.84 175.99,160.19 176.48,166.22 176.98,172.88 177.48,180.13 177.97,187.92 178.47,196.19 178.97,204.88 179.46,213.93 179.96,223.28 180.45,232.86 180.95,242.61 181.45,252.46 181.94,262.34 182.44,272.18 182.94,281.91 183.43,291.46 183.93,300.76 184.43,309.75 184.92,318.38 185.42,326.56 185.92,334.26 186.41,341.41 186.91,347.97 187.41,353.89 187.90,359.12 188.40,363.63 188.90,367.39 189.39,370.38 189.89,372.57 190.39,373.94 190.88,374.49 191.38,374.21 191.88,373.12 192.37,371.22 192.87,368.53 193.37,365.06 193.86,360.84 194.36,355.90 194.86,350.26 195.35,343.98 195.85,337.10 196.35,329.66 196.84,321.72 197.34,313.33 197.84,304.55 198.33,295.44 198.83,286.07 199.33,276.50 199.82,266.81 200.32,257.04 200.82,247.29 201.31,237.61 201.81,228.07 202.31,218.74 202.80,209.68 203.30,200.97 203.80,192.65 204.29,184.79 204.79,177.44 205.28,170.66 205.78,164.49 206.28,158.97 206.77,154.15 207.27,150.05 207.77,146.71 208.26,144.15 208.76,142.39 209.26,141.44 209.75,141.31 210.25,141.99 210.75,143.49 211.24,145.78 211.74,148.87 212.24,152.72 212.73,157.30 213.23,162.60 213.73,168.56 214.22,175.15 214.72,182.31 215.22,190.01 215.71,198.18 216.21,206.78 216.71,215.73 217.20,224.97 217.70,234.45 218.20,244.09 218.69,253.83 219.19,263.60 219.69,273.33 220.18,282.94 220.68,292.39 221.18,301.59 221.67,310.48 222.17,319.01 222.67,327.10 223.16,334.71 223.66,341.78 224.16,348.27 224.65,354.12 225.15,359.29 225.65,363.75 226.14,367.47 226.64,370.43 227.14,372.59 227.63,373.95 228.13,374.49 228.62,374.21 229.12,373.11 229.62,371.19 230.11,368.46 230.61,364.95 231.11,360.68 231.60,355.68 232.10,349.99 232.60,343.64 233.09,336.68 233.59,329.15 234.09,321.12 234.58,312.63 235.08,303.76 235.58,294.55 236.07,285.07 236.57,275.39 237.07,265.58 237.56,255.71 238.06,245.85 238.56,236.06 239.05,226.41 239.55,216.97 240.05,207.82 240.54,199.00 241.04,190.59 241.54,182.64 242.03,175.21 242.53,168.35 243.03,162.10 243.52,156.53 244.02,151.65 244.52,147.51 245.01,144.13 245.51,141.54 246.01,139.76 246.50,138.80 247.00,138.66 247.50,139.35 247.99,140.87 248.49,143.19 248.99,146.31 249.48,150.20 249.98,154.84 250.48,160.19 250.97,166.22 251.47,172.88 251.97,180.13 252.46,187.92 252.96,196.19 253.45,204.88 253.95,213.93 254.45,223.28 254.94,232.86 255.44,242.61 255.94,252.46 256.43,262.34 256.93,272.18 257.43,281.91 257.92,291.46 258.42,300.76 258.92,309.75 259.41,318.38 259.91,326.56 260.41,334.26 260.90,341.41 261.40,347.97 261.90,353.89 262.39,359.12 262.89,363.63 263.39,367.39 263.88,370.38 264.38,372.57 264.88,373.94 265.37,374.49 265.87,374.21 266.37,373.12 266.86,371.22 267.36,368.53 267.86,365.06 268.35,360.84 268.85,355.90 269.35,350.26 269.84,343.98 270.34,337.10 270.84,329.66 271.33,321.72 271.83,313.33 272.33,304.55 272.82,295.44 273.32,286.07 273.82,276.50 274.31,266.81 274.81,257.04 275.31,247.29 275.80,237.61 276.30,228.07 276.80,218.74 277.29,209.68 277.79,200.97 278.28,192.65 278.78,184.79 279.28,177.44 279.77,170.66 280.27,164.49 280.77,158.97 281.26,154.15 281.76,150.05 282.26,146.71 282.75,144.15 283.25,142.39 283.75,141.44 284.24,141.31 284.74,141.99 285.24,143.49 285.73,145.78 286.23,148.87 286.73,152.72 287.22,157.30 287.72,162.60 288.22,168.56 288.71,175.15 289.21,182.31 289.71,190.01 290.20,198.18 290.70,206.78 291.20,215.73 291.69,224.97 292.19,234.45 292.69,244.09 293.18,253.83 293.68,263.60 294.18,273.33 294.67,282.94 295.17,292.39 295.67,301.59 296.16,310.48 296.66,319.01 297.16,327.10 297.65,334.71 298.15,341.78 298.65,348.27 299.14,354.12 299.64,359.29 300.14,363.75 300.63,367.47 301.13,370.43 301.63,372.59 302.12,373.95 302.62,374.49 303.11,374.21 303.61,373.11 304.11,371.19 304.60,368.46 305.10,364.95 305.60,360.68 306.09,355.68 306.59,349.99 307.09,343.64 307.58,336.68 308.08,329.15 308.58,321.12 309.07,312.63 309.57,303.76 310.07,294.55 310.56,285.07 311.06,275.39 311.56,265.58 312.05,255.71 312.55,245.85 313.05,236.06 313.54,226.41 314.04,216.97 314.54,207.82 315.03,199.00 315.53,190.59 316.03,182.64 316.52,175.21 317.02,168.35 317.52,162.10 318.01,156.53 318.51,151.65 319.01,147.51 319.50,144.13 320.00,141.54 320.50,139.76 320.99,138.80 321.49,138.66 321.99,139.35 322.48,140.87 322.98,143.19 323.48,146.31 323.97,150.20 324.47,154.84 324.97,160.19 325.46,166.22 325.96,172.88 326.46,180.13 326.95,187.92 327.45,196.19 327.94,204.88 328.44,213.93 328.94,223.28 329.43,232.86 329.93,242.61 330.43,252.46 330.92,262.34 331.42,272.18 331.92,281.91 332.41,291.46 332.91,300.76 333.41,309.75 333.90,318.38 334.40,326.56 334.90,334.26 335.39,341.41 335.89,347.97 336.39,353.89 336.88,359.12 337.38,363.63 337.88,367.39 338.37,370.38 338.87,372.57 339.37,373.94 339.86,374.49 340.36,374.21 340.86,373.12 341.35,371.22 341.85,368.53 342.35,365.06 342.84,360.84 343.34,355.90 343.84,350.26 344.33,343.98 344.83,337.10 345.33,329.66 345.82,321.72 346.32,313.33 346.82,304.55 347.31,295.44 347.81,286.07 348.31,276.50 348.80,266.81 349.30,257.04 349.80,247.29 350.29,237.61 350.79,228.07 351.29,218.74 351.78,209.68 352.28,200.97 352.77,192.65 353.27,184.79 353.77,177.44 354.26,170.66 354.76,164.49 355.26,158.97 355.75,154.15 356.25,150.05 356.75,146.71 357.24,144.15 357.74,142.39 358.24,141.44 358.73,141.31 359.23,141.99 359.73,143.49 360.22,145.78 360.72,148.87 361.22,152.72 361.71,157.30 362.21,162.60 362.71,168.56 363.20,175.15 363.70,182.31 364.20,190.01 364.69,198.18 365.19,206.78 365.69,215.73 366.18,224.97 366.68,234.45 367.18,244.09 367.67,253.83 368.17,263.60 368.67,273.33 369.16,282.94 369.66,292.39 370.16,301.59 370.65,310.48 371.15,319.01 371.65,327.10 372.14,334.71 372.64,341.78 373.14,348.27 373.63,354.12 374.13,359.29 374.63,363.75 375.12,367.47 375.62,370.43 376.12,372.59 376.61,373.95 377.11,374.49 377.60,374.21 378.10,373.11 378.60,371.19 379.09,368.46 379.59,364.95 380.09,360.68 380.58,355.68 381.08,349.99 381.58,343.64 382.07,336.68 382.57,329.15 383.07,321.12 383.56,312.63 384.06,303.76 384.56,294.55 385.05,285.07 385.55,275.39 386.05,265.58 386.54,255.71 387.04,245.85 387.54,236.06 388.03,226.41 388.53,216.97 389.03,207.82 389.52,199.00 390.02,190.59 390.52,182.64 391.01,175.21 391.51,168.35 392.01,162.10 392.50,156.53 393.00,151.65 393.50,147.51 393.99,144.13 394.49,141.54 394.99,139.76 395.48,138.80 395.98,138.66 396.48,139.35 396.97,140.87 397.47,143.19 397.97,146.31 398.46,150.20 398.96,154.84 399.46,160.19 399.95,166.22 400.45,172.88 400.95,180.13 401.44,187.92 401.94,196.19 402.43,204.88 402.93,213.93 403.43,223.28 403.92,232.86 404.42,242.61 404.92,252.46 405.41,262.34 405.91,272.18 406.41,281.91 406.90,291.46 407.40,300.76 407.90,309.75 408.39,318.38 408.89,326.56 409.39,334.26 409.88,341.41 410.38,347.97 410.88,353.89 411.37,359.12 411.87,363.63 412.37,367.39 412.86,370.38 413.36,372.57 413.86,373.94 414.35,374.49 414.85,374.21 415.35,373.12 415.84,371.22 416.34,368.53 416.84,365.06 417.33,360.84 417.83,355.90 418.33,350.26 418.82,343.98 419.32,337.10 419.82,329.66 420.31,321.72 420.81,313.33 421.31,304.55 421.80,295.44 422.30,286.07 422.80,276.50 423.29,266.81 423.79,257.04 424.29,247.29 424.78,237.61 425.28,228.07 425.78,218.74 426.27,209.68 426.77,200.97 427.26,192.65 427.76,184.79 428.26,177.44 428.75,170.66 429.25,164.49 429.75,158.97 430.24,154.15 430.74,150.05 431.24,146.71 431.73,144.15 432.23,142.39 432.73,141.44 433.22,141.31 433.72,141.99 434.22,143.49 434.71,145.78 435.21,148.87 435.71,152.72 436.20,157.30 436.70,162.60 437.20,168.56 437.69,175.15 438.19,182.31 438.69,190.01 439.18,198.18 439.68,206.78 440.18,215.73 440.67,224.97 441.17,234.45 441.67,244.09 442.16,253.83 442.66,263.60 443.16,273.33 443.65,282.94 444.15,292.39 444.65,301.59 445.14,310.48 445.64,319.01 446.14,327.10 446.63,334.71 447.13,341.78 447.63,348.27 448.12,354.12 448.62,359.29 449.12,363.75 449.61,367.47 450.11,370.43 450.61,372.59 451.10,373.95 451.60,374.49 452.09,374.21 452.59,373.11 453.09,371.19 453.58,368.46 454.08,364.95 454.58,360.68 455.07,355.68 455.57,349.99 456.07,343.64 456.56,336.68 457.06,329.15 457.56,321.12 458.05,312.63 458.55,303.76 459.05,294.55 459.54,285.07 460.04,275.39 460.54,265.58 461.03,255.71 461.53,245.85 462.03,236.06 462.52,226.41 463.02,216.97 463.52,207.82 464.01,199.00 464.51,190.59 465.01,182.64 465.50,175.21 466.00,168.35 466.50,162.10 466.99,156.53 467.49,151.65 467.99,147.51 468.48,144.13 468.98,141.54 469.48,139.76 469.97,138.80 470.47,138.66 470.97,139.35 471.46,140.87 471.96,143.19 472.46,146.31 472.95,150.20 473.45,154.84 473.95,160.19 474.44,166.22 474.94,172.88 475.44,180.13 475.93,187.92 476.43,196.19 476.93,204.88 477.42,213.93 477.92,223.28 478.41,232.86 478.91,242.61 479.41,252.46 479.90,262.34 480.40,272.18 480.90,281.91 481.39,291.46 481.89,300.76 482.39,309.75 482.88,318.38 483.38,326.56 483.88,334.26 484.37,341.41 484.87,347.97 485.37,353.89 485.86,359.12 486.36,363.63 486.86,367.39 487.35,370.38 487.85,372.57 488.35,373.94 488.84,374.49 489.34,374.21 489.84,373.12 490.33,371.22 490.83,368.53 491.33,365.06 491.82,360.84 492.32,355.90 492.82,350.26 493.31,343.98 493.81,337.10 494.31,329.66 494.80,321.72 495.30,313.33 495.80,304.55 496.29,295.44 496.79,286.07 497.29,276.50 497.78,266.81 498.28,257.04 498.78,247.29 499.27,237.61 499.77,228.07 500.27,218.74 500.76,209.68 501.26,200.97 501.75,192.65 502.25,184.79 502.75,177.44 503.24,170.66 503.74,164.49 504.24,158.97 504.73,154.15 505.23,150.05 505.73,146.71 506.22,144.15 506.72,142.39 507.22,141.44 507.71,141.31 508.21,141.99 508.71,143.49 509.20,145.78 509.70,148.87 510.20,152.72 510.69,157.30 511.19,162.60 511.69,168.56 512.18,175.15 512.68,182.31 513.18,190.01 513.67,198.18 514.17,206.78 514.67,215.73 515.16,224.97 515.66,234.45 516.16,244.09 516.65,253.83 517.15,263.60 517.65,273.33 518.14,282.94 518.64,292.39 519.14,301.59 519.63,310.48 520.13,319.01 520.63,327.10 521.12,334.71 521.62,341.78 522.12,348.27 522.61,354.12 523.11,359.29 523.61,363.75 524.10,367.47 524.60,370.43 525.10,372.59 525.59,373.95 526.09,374.49 526.58,374.21 527.08,373.11 527.58,371.19 528.07,368.46 528.57,364.95 529.07,360.68 529.56,355.68 530.06,349.99 530.56,343.64 531.05,336.68 531.55,329.15 532.05,321.12 532.54,312.63 533.04,303.76 533.54,294.55 534.03,285.07 534.53,275.39 535.03,265.58 535.52,255.71 536.02,245.85 536.52,236.06 537.01,226.41 537.51,216.97 538.01,207.82 538.50,199.00 539.00,190.59 539.50,182.64 539.99,175.21 540.49,168.35 540.99,162.10 541.48,156.53 541.98,151.65 542.48,147.51 542.97,144.13 543.47,141.54 543.97,139.76 544.46,138.80 544.96,138.66 545.46,139.35 545.95,140.87 546.45,143.19 546.95,146.31 547.44,150.20 547.94,154.84 548.44,160.19 548.93,166.22 549.43,172.88 549.93,180.13 550.42,187.92 550.92,196.19 551.41,204.88 551.91,213.93 552.41,223.28 552.90,232.86 553.40,242.61 553.90,252.46 554.39,262.34 554.89,272.18 555.39,281.91 555.88,291.46 556.38,300.76 556.88,309.75 557.37,318.38 557.87,326.56 558.37,334.26 558.86,341.41 559.36,347.97 559.86,353.89 560.35,359.12 560.85,363.63 561.35,367.39 561.84,370.38 562.34,372.57 562.84,373.94 563.33,374.49 563.83,374.21 564.33,373.12 564.82,371.22 565.32,368.53 565.82,365.06 566.31,360.84 566.81,355.90 567.31,350.26 567.80,343.98 568.30,337.10 568.80,329.66 569.29,321.72 569.79,313.33 570.29,304.55 570.78,295.44 571.28,286.07 571.78,276.50 572.27,266.81 572.77,257.04 573.27,247.29 573.76,237.61 574.26,228.07 574.76,218.74 575.25,209.68 575.75,200.97 576.25,192.65 576.74,184.79 577.24,177.44 577.73,170.66 578.23,164.49 578.73,158.97 579.22,154.15 579.72,150.05 580.22,146.71 580.71,144.15 581.21,142.39 581.71,141.44 582.20,141.31 582.70,141.99 583.20,143.49 583.69,145.78 584.19,148.87 584.69,152.72 585.18,157.30 585.68,162.60 586.18,168.56 586.67,175.15 587.17,182.31 587.67,190.01 588.16,198.18 588.66,206.78 589.16,215.73 589.65,224.97 590.15,234.45 590.65,244.09 591.14,253.83 591.64,263.60 592.14,273.33 592.63,282.94 593.13,292.39 593.63,301.59 594.12,310.48 594.62,319.01 595.12,327.10 595.61,334.71 596.11,341.78 596.61,348.27 597.10,354.12 597.60,359.29 598.10,363.75 598.59,367.47 599.09,370.43 599.59,372.59 600.08,373.95 600.58,374.49 601.07,374.21 601.57,373.11 602.07,371.19 602.56,368.46 603.06,364.95 603.56,360.68 604.05,355.68 604.55,349.99 605.05,343.64 605.54,336.68 606.04,329.15 606.54,321.12 607.03,312.63 607.53,303.76 608.03,294.55 608.52,285.07 609.02,275.39 609.52,265.58 610.01,255.71 610.51,245.85 611.01,236.06 611.50,226.41 612.00,216.97 612.50,207.82 612.99,199.00 613.49,190.59 613.99,182.64 614.48,175.21 614.98,168.35 615.48,162.10 615.97,156.53 616.47,151.65 616.97,147.51 617.46,144.13 617.96,141.54 618.46,139.76 618.95,138.80 619.45,138.66 619.95,139.35 620.44,140.87 620.94,143.19 621.44,146.31 621.93,150.20 622.43,154.84 622.93,160.19 623.42,166.22 623.92,172.88 624.42,180.13 624.91,187.92 625.41,196.19 625.90,204.88 626.40,213.93 626.90,223.28 627.39,232.86 627.89,242.61 628.39,252.46 628.88,262.34 629.38,272.18 629.88,281.91 630.37,291.46 630.87,300.76 631.37,309.75 631.86,318.38 632.36,326.56 632.86,334.26 633.35,341.41 633.85,347.97 634.35,353.89 634.84,359.12 635.34,363.63 635.84,367.39 636.33,370.38 636.83,372.57 637.33,373.94 637.82,374.49 638.32,374.21 638.82,373.12 639.31,371.22 639.81,368.53 640.31,365.06 640.80,360.84 641.30,355.90 641.80,350.26 642.29,343.98 642.79,337.10 643.29,329.66 643.78,321.72 644.28,313.33 644.78,304.55 645.27,295.44 645.77,286.07 646.27,276.50 646.76,266.81 647.26,257.04 647.76,247.29 648.25,237.61 648.75,228.07 649.25,218.74 649.74,209.68 650.24,200.97 650.73,192.65 651.23,184.79 651.73,177.44 652.22,170.66 652.72,164.49 653.22,158.97 653.71,154.15 654.21,150.05 654.71,146.71 655.20,144.15 655.70,142.39 656.20,141.44 656.69,141.31 657.19,141.99 657.69,143.49 658.18,145.78 658.68,148.87 659.18,152.72 659.67,157.30 660.17,162.60 660.67,168.56 661.16,175.15 661.66,182.31 662.16,190.01 662.65,198.18 663.15,206.78 663.65,215.73 664.14,224.97 664.64,234.45 665.14,244.09 665.63,253.83 666.13,263.60 666.63,273.33 667.12,282.94 667.62,292.39 668.12,301.59 668.61,310.48 669.11,319.01 669.61,327.10 670.10,334.71 670.60,341.78 671.10,348.27 671.59,354.12 672.09,359.29 672.59,363.75 673.08,367.47 673.58,370.43 674.08,372.59 674.57,373.95 675.07,374.49 675.56,374.21 676.06,373.11 676.56,371.19 677.05,368.46 677.55,364.95 678.05,360.68 678.54,355.68 679.04,349.99 679.54,343.64 680.03,336.68 680.53,329.15 681.03,321.12 681.52,312.63 682.02,303.76 682.52,294.55 683.01,285.07 683.51,275.39 684.01,265.58 684.50,255.71 685.00,245.85 685.50,236.06 685.99,226.41 686.49,216.97 686.99,207.82 687.48,199.00 687.98,190.59 688.48,182.64 688.97,175.21 689.47,168.35 689.97,162.10 690.46,156.53 690.96,151.65 691.46,147.51 691.95,144.13 692.45,141.54 692.95,139.76 693.44,138.80 693.94,138.66 694.44,139.35 694.93,140.87 695.43,143.19 695.93,146.31 696.42,150.20 696.92,154.84 697.42,160.19 697.91,166.22 698.41,172.88 698.91,180.13 699.40,187.92 699.90,196.19 700.39,204.88 700.89,213.93 701.39,223.28 701.88,232.86 702.38,242.61 702.88,252.46 703.37,262.34 703.87,272.18 704.37,281.91 704.86,291.46 705.36,300.76 705.86,309.75 706.35,318.38 706.85,326.56 707.35,334.26 707.84,341.41 708.34,347.97 708.84,353.89 709.33,359.12 709.83,363.63 710.33,367.39 710.82,370.38 711.32,372.57 711.82,373.94 712.31,374.49 712.81,374.21 713.31,373.12 713.80,371.22 714.30,368.53 714.80,365.06 715.29,360.84 715.79,355.90 716.29,350.26 716.78,343.98 717.28,337.10 717.78,329.66 718.27,321.72 718.77,313.33 719.27,304.55 719.76,295.44 720.26,286.07 720.76,276.50 721.25,266.81 721.75,257.04 722.25,247.29 722.74,237.61 723.24,228.07 723.74,218.74 724.23,209.68 724.73,200.97 725.22,192.65 725.72,184.79 726.22,177.44 726.71,170.66 727.21,164.49 727.71,158.97 728.20,154.15 728.70,150.05 729.20,146.71 729.69,144.15 730.19,142.39 730.69,141.44 731.18,141.31 731.68,141.99 732.18,143.49 732.67,145.78 733.17,148.87 733.67,152.72 734.16,157.30 734.66,162.60 735.16,168.56 735.65,175.15 736.15,182.31 736.65,190.01 737.14,198.18 737.64,206.78 738.14,215.73 738.63,224.97 739.13,234.45 739.63,244.09 740.12,253.83 740.62,263.60 741.12,273.33 741.61,282.94 742.11,292.39 742.61,301.59 743.10,310.48 743.60,319.01 744.10,327.10 744.59,334.71 745.09,341.78 745.59,348.27 746.08,354.12 746.58,359.29 747.08,363.75 747.57,367.47 748.07,370.43 748.57,372.59 749.06,373.95 749.56,374.49 750.05,374.21 750.55,373.11 751.05,371.19 751.54,368.46 752.04,364.95 752.54,360.68 753.03,355.68 753.53,349.99 754.03,343.64 754.52,336.68 755.02,329.15 755.52,321.12 756.01,312.63 756.51,303.76 757.01,294.55 757.50,285.07 758.00,275.39 758.50,265.58 758.99,255.71 759.49,245.85 759.99,236.06 760.48,226.41 760.98,216.97 761.48,207.82 761.97,199.00 762.47,190.59 762.97,182.64 763.46,175.21 763.96,168.35 764.46,162.10 764.95,156.53 765.45,151.65 765.95,147.51 766.44,144.13 766.94,141.54 767.44,139.76 767.93,138.80 768.43,138.66 768.93,139.35 769.42,140.87 769.92,143.19 770.42,146.31 770.91,150.20 771.41,154.84 771.91,160.19 772.40,166.22 772.90,172.88 773.40,180.13 773.89,187.92 774.39,196.19 774.88,204.88 775.38,213.93 775.88,223.28 776.37,232.86 776.87,242.61 777.37,252.46 777.86,262.34 778.36,272.18 778.86,281.91 779.35,291.46 779.85,300.76 780.35,309.75 780.84,318.38 781.34,326.56 781.84,334.26 782.33,341.41 782.83,347.97 783.33,353.89 783.82,359.12 784.32,363.63 784.82,367.39 785.31,370.38 785.81,372.57 786.31,373.94 786.80,374.49 787.30,374.21" fill="none" stroke="#12129e" stroke-width="1.4"/></g><g clip-path="url(#pc2)"><polyline points="42.40,631.40 42.90,631.40 43.39,631.40 43.89,631.40 44.39,631.40 44.88,631.40 45.38,631.40 45.88,631.40 46.37,631.40 46.87,631.40 47.37,631.40 47.86,631.40 48.36,631.40 48.86,631.40 49.35,631.40 49.85,631.40 50.35,631.40 50.84,631.40 51.34,631.40 51.84,631.40 52.33,631.40 52.83,631.40 53.33,631.40 53.82,631.40 54.32,631.40 54.81,631.40 55.31,631.40 55.81,631.40 56.30,631.40 56.80,631.40 57.30,631.40 57.79,631.40 58.29,631.40 58.79,631.40 59.28,631.40 59.78,631.40 60.28,631.40 60.77,631.40 61.27,631.40 61.77,631.40 62.26,631.40 62.76,631.40 63.26,631.40 63.75,631.40 64.25,631.40 64.75,631.40 65.24,631.40 65.74,631.40 66.24,631.40 66.73,631.40 67.23,631.40 67.73,631.40 68.22,631.40 68.72,631.40 69.22,631.40 69.71,631.40 70.21,631.40 70.71,631.40 71.20,631.40 71.70,631.40 72.20,631.40 72.69,631.40 73.19,631.40 73.69,631.40 74.18,631.40 74.68,631.40 75.18,631.40 75.67,631.40 76.17,631.40 76.67,631.40 77.16,631.40 77.66,631.40 78.16,631.40 78.65,631.40 79.15,627.08 79.64,617.10 80.14,607.15 80.64,597.24 81.13,587.39 81.63,577.62 82.13,567.94 82.62,558.37 83.12,548.93 83.62,539.64 84.11,530.51 84.61,521.55 85.11,512.79 85.60,504.23 86.10,495.90 86.60,487.80 87.09,479.96 87.59,472.38 88.09,465.08 88.58,458.08 89.08,451.37 89.58,444.99 90.07,438.93 90.57,433.21 91.07,427.83 91.56,422.81 92.06,418.16 92.56,413.89 93.05,409.99 93.55,406.48 94.05,403.37 94.54,400.66 95.04,398.35 95.54,396.45 96.03,394.97 96.53,393.89 97.03,393.24 97.52,393.00 98.02,393.18 98.52,393.78 99.01,394.80 99.51,396.23 100.01,398.07 100.50,400.32 101.00,402.98 101.50,406.04 101.99,409.49 102.49,413.34 102.99,417.56 103.48,422.16 103.98,427.13 104.47,432.46 104.97,438.13 105.47,444.15 105.96,450.49 106.46,457.15 106.96,464.12 107.45,471.38 107.95,478.92 108.45,486.73 108.94,494.79 109.44,503.09 109.94,511.62 110.43,520.35 110.93,529.28 111.43,538.39 111.92,547.67 112.42,557.09 112.92,566.64 113.41,576.30 113.91,586.07 114.41,595.91 114.90,605.81 115.40,615.76 115.90,625.73 116.39,631.40 116.89,631.40 117.39,631.40 117.88,631.40 118.38,631.40 118.88,631.40 119.37,631.40 119.87,631.40 120.37,631.40 120.86,631.40 121.36,631.40 121.86,631.40 122.35,631.40 122.85,631.40 123.35,631.40 123.84,631.40 124.34,631.40 124.84,631.40 125.33,631.40 125.83,631.40 126.33,631.40 126.82,631.40 127.32,631.40 127.82,631.40 128.31,631.40 128.81,631.40 129.31,631.40 129.80,631.40 130.30,631.40 130.79,631.40 131.29,631.40 131.79,631.40 132.28,631.40 132.78,631.40 133.28,631.40 133.77,631.40 134.27,631.40 134.77,631.40 135.26,631.40 135.76,631.40 136.26,631.40 136.75,631.40 137.25,631.40 137.75,631.40 138.24,631.40 138.74,631.40 139.24,631.40 139.73,631.40 140.23,631.40 140.73,631.40 141.22,631.40 141.72,631.40 142.22,631.40 142.71,631.40 143.21,631.40 143.71,631.40 144.20,631.40 144.70,631.40 145.20,631.40 145.69,631.40 146.19,631.40 146.69,631.40 147.18,631.40 147.68,631.40 148.18,631.40 148.67,631.40 149.17,631.40 149.67,631.40 150.16,631.40 150.66,631.40 151.16,631.40 151.65,631.40 152.15,631.40 152.65,631.40 153.14,631.40 153.64,627.08 154.13,617.10 154.63,607.15 155.13,597.24 155.62,587.39 156.12,577.62 156.62,567.94 157.11,558.37 157.61,548.93 158.11,539.64 158.60,530.51 159.10,521.55 159.60,512.79 160.09,504.23 160.59,495.90 161.09,487.80 161.58,479.96 162.08,472.38 162.58,465.08 163.07,458.08 163.57,451.37 164.07,444.99 164.56,438.93 165.06,433.21 165.56,427.83 166.05,422.81 166.55,418.16 167.05,413.89 167.54,409.99 168.04,406.48 168.54,403.37 169.03,400.66 169.53,398.35 170.03,396.45 170.52,394.97 171.02,393.89 171.52,393.24 172.01,393.00 172.51,393.18 173.01,393.78 173.50,394.80 174.00,396.23 174.50,398.07 174.99,400.32 175.49,402.98 175.99,406.04 176.48,409.49 176.98,413.34 177.48,417.56 177.97,422.16 178.47,427.13 178.97,432.46 179.46,438.13 179.96,444.15 180.45,450.49 180.95,457.15 181.45,464.12 181.94,471.38 182.44,478.92 182.94,486.73 183.43,494.79 183.93,503.09 184.43,511.62 184.92,520.35 185.42,529.28 185.92,538.39 186.41,547.67 186.91,557.09 187.41,566.64 187.90,576.30 188.40,586.07 188.90,595.91 189.39,605.81 189.89,615.76 190.39,625.73 190.88,631.40 191.38,631.40 191.88,631.40 192.37,631.40 192.87,631.40 193.37,631.40 193.86,631.40 194.36,631.40 194.86,631.40 195.35,631.40 195.85,631.40 196.35,631.40 196.84,631.40 197.34,631.40 197.84,631.40 198.33,631.40 198.83,631.40 199.33,631.40 199.82,631.40 200.32,631.40 200.82,631.40 201.31,631.40 201.81,631.40 202.31,631.40 202.80,631.40 203.30,631.40 203.80,631.40 204.29,631.40 204.79,631.40 205.28,631.40 205.78,631.40 206.28,631.40 206.77,631.40 207.27,631.40 207.77,631.40 208.26,631.40 208.76,631.40 209.26,631.40 209.75,631.40 210.25,631.40 210.75,631.40 211.24,631.40 211.74,631.40 212.24,631.40 212.73,631.40 213.23,631.40 213.73,631.40 214.22,631.40 214.72,631.40 215.22,631.40 215.71,631.40 216.21,631.40 216.71,631.40 217.20,631.40 217.70,631.40 218.20,631.40 218.69,631.40 219.19,631.40 219.69,631.40 220.18,631.40 220.68,631.40 221.18,631.40 221.67,631.40 222.17,631.40 222.67,631.40 223.16,631.40 223.66,631.40 224.16,631.40 224.65,631.40 225.15,631.40 225.65,631.40 226.14,631.40 226.64,631.40 227.14,631.40 227.63,631.40 228.13,627.08 228.62,617.10 229.12,607.15 229.62,597.24 230.11,587.39 230.61,577.62 231.11,567.94 231.60,558.37 232.10,548.93 232.60,539.64 233.09,530.51 233.59,521.55 234.09,512.79 234.58,504.23 235.08,495.90 235.58,487.80 236.07,479.96 236.57,472.38 237.07,465.08 237.56,458.08 238.06,451.37 238.56,444.99 239.05,438.93 239.55,433.21 240.05,427.83 240.54,422.81 241.04,418.16 241.54,413.89 242.03,409.99 242.53,406.48 243.03,403.37 243.52,400.66 244.02,398.35 244.52,396.45 245.01,394.97 245.51,393.89 246.01,393.24 246.50,393.00 247.00,393.18 247.50,393.78 247.99,394.80 248.49,396.23 248.99,398.07 249.48,400.32 249.98,402.98 250.48,406.04 250.97,409.49 251.47,413.34 251.97,417.56 252.46,422.16 252.96,427.13 253.45,432.46 253.95,438.13 254.45,444.15 254.94,450.49 255.44,457.15 255.94,464.12 256.43,471.38 256.93,478.92 257.43,486.73 257.92,494.79 258.42,503.09 258.92,511.62 259.41,520.35 259.91,529.28 260.41,538.39 260.90,547.67 261.40,557.09 261.90,566.64 262.39,576.30 262.89,586.07 263.39,595.91 263.88,605.81 264.38,615.76 264.88,625.73 265.37,631.40 265.87,631.40 266.37,631.40 266.86,631.40 267.36,631.40 267.86,631.40 268.35,631.40 268.85,631.40 269.35,631.40 269.84,631.40 270.34,631.40 270.84,631.40 271.33,631.40 271.83,631.40 272.33,631.40 272.82,631.40 273.32,631.40 273.82,631.40 274.31,631.40 274.81,631.40 275.31,631.40 275.80,631.40 276.30,631.40 276.80,631.40 277.29,631.40 277.79,631.40 278.28,631.40 278.78,631.40 279.28,631.40 279.77,631.40 280.27,631.40 280.77,631.40 281.26,631.40 281.76,631.40 282.26,631.40 282.75,631.40 283.25,631.40 283.75,631.40 284.24,631.40 284.74,631.40 285.24,631.40 285.73,631.40 286.23,631.40 286.73,631.40 287.22,631.40 287.72,631.40 288.22,631.40 288.71,631.40 289.21,631.40 289.71,631.40 290.20,631.40 290.70,631.40 291.20,631.40 291.69,631.40 292.19,631.40 292.69,631.40 293.18,631.40 293.68,631.40 294.18,631.40 294.67,631.40 295.17,631.40 295.67,631.40 296.16,631.40 296.66,631.40 297.16,631.40 297.65,631.40 298.15,631.40 298.65,631.40 299.14,631.40 299.64,631.40 300.14,631.40 300.63,631.40 301.13,631.40 301.63,631.40 302.12,631.40 302.62,627.08 303.11,617.10 303.61,607.15 304.11,597.24 304.60,587.39 305.10,577.62 305.60,567.94 306.09,558.37 306.59,548.93 307.09,539.64 307.58,530.51 308.08,521.55 308.58,512.79 309.07,504.23 309.57,495.90 310.07,487.80 310.56,479.96 311.06,472.38 311.56,465.08 312.05,458.08 312.55,451.37 313.05,444.99 313.54,438.93 314.04,433.21 314.54,427.83 315.03,422.81 315.53,418.16 316.03,413.89 316.52,409.99 317.02,406.48 317.52,403.37 318.01,400.66 318.51,398.35 319.01,396.45 319.50,394.97 320.00,393.89 320.50,393.24 320.99,393.00 321.49,393.18 321.99,393.78 322.48,394.80 322.98,396.23 323.48,398.07 323.97,400.32 324.47,402.98 324.97,406.04 325.46,409.49 325.96,413.34 326.46,417.56 326.95,422.16 327.45,427.13 327.94,432.46 328.44,438.13 328.94,444.15 329.43,450.49 329.93,457.15 330.43,464.12 330.92,471.38 331.42,478.92 331.92,486.73 332.41,494.79 332.91,503.09 333.41,511.62 333.90,520.35 334.40,529.28 334.90,538.39 335.39,547.67 335.89,557.09 336.39,566.64 336.88,576.30 337.38,586.07 337.88,595.91 338.37,605.81 338.87,615.76 339.37,625.73 339.86,631.40 340.36,631.40 340.86,631.40 341.35,631.40 341.85,631.40 342.35,631.40 342.84,631.40 343.34,631.40 343.84,631.40 344.33,631.40 344.83,631.40 345.33,631.40 345.82,631.40 346.32,631.40 346.82,631.40 347.31,631.40 347.81,631.40 348.31,631.40 348.80,631.40 349.30,631.40 349.80,631.40 350.29,631.40 350.79,631.40 351.29,631.40 351.78,631.40 352.28,631.40 352.77,631.40 353.27,631.40 353.77,631.40 354.26,631.40 354.76,631.40 355.26,631.40 355.75,631.40 356.25,631.40 356.75,631.40 357.24,631.40 357.74,631.40 358.24,631.40 358.73,631.40 359.23,631.40 359.73,631.40 360.22,631.40 360.72,631.40 361.22,631.40 361.71,631.40 362.21,631.40 362.71,631.40 363.20,631.40 363.70,631.40 364.20,631.40 364.69,631.40 365.19,631.40 365.69,631.40 366.18,631.40 366.68,631.40 367.18,631.40 367.67,631.40 368.17,631.40 368.67,631.40 369.16,631.40 369.66,631.40 370.16,631.40 370.65,631.40 371.15,631.40 371.65,631.40 372.14,631.40 372.64,631.40 373.14,631.40 373.63,631.40 374.13,631.40 374.63,631.40 375.12,631.40 375.62,631.40 376.12,631.40 376.61,631.40 377.11,627.08 377.60,617.10 378.10,607.15 378.60,597.24 379.09,587.39 379.59,577.62 380.09,567.94 380.58,558.37 381.08,548.93 381.58,539.64 382.07,530.51 382.57,521.55 383.07,512.79 383.56,504.23 384.06,495.90 384.56,487.80 385.05,479.96 385.55,472.38 386.05,465.08 386.54,458.08 387.04,451.37 387.54,444.99 388.03,438.93 388.53,433.21 389.03,427.83 389.52,422.81 390.02,418.16 390.52,413.89 391.01,409.99 391.51,406.48 392.01,403.37 392.50,400.66 393.00,398.35 393.50,396.45 393.99,394.97 394.49,393.89 394.99,393.24 395.48,393.00 395.98,393.18 396.48,393.78 396.97,394.80 397.47,396.23 397.97,398.07 398.46,400.32 398.96,402.98 399.46,406.04 399.95,409.49 400.45,413.34 400.95,417.56 401.44,422.16 401.94,427.13 402.43,432.46 402.93,438.13 403.43,444.15 403.92,450.49 404.42,457.15 404.92,464.12 405.41,471.38 405.91,478.92 406.41,486.73 406.90,494.79 407.40,503.09 407.90,511.62 408.39,520.35 408.89,529.28 409.39,538.39 409.88,547.67 410.38,557.09 410.88,566.64 411.37,576.30 411.87,586.07 412.37,595.91 412.86,605.81 413.36,615.76 413.86,625.73 414.35,631.40 414.85,631.40 415.35,631.40 415.84,631.40 416.34,631.40 416.84,631.40 417.33,631.40 417.83,631.40 418.33,631.40 418.82,631.40 419.32,631.40 419.82,631.40 420.31,631.40 420.81,631.40 421.31,631.40 421.80,631.40 422.30,631.40 422.80,631.40 423.29,631.40 423.79,631.40 424.29,631.40 424.78,631.40 425.28,631.40 425.78,631.40 426.27,631.40 426.77,631.40 427.26,631.40 427.76,631.40 428.26,631.40 428.75,631.40 429.25,631.40 429.75,631.40 430.24,631.40 430.74,631.40 431.24,631.40 431.73,631.40 432.23,631.40 432.73,631.40 433.22,631.40 433.72,631.40 434.22,631.40 434.71,631.40 435.21,631.40 435.71,631.40 436.20,631.40 436.70,631.40 437.20,631.40 437.69,631.40 438.19,631.40 438.69,631.40 439.18,631.40 439.68,631.40 440.18,631.40 440.67,631.40 441.17,631.40 441.67,631.40 442.16,631.40 442.66,631.40 443.16,631.40 443.65,631.40 444.15,631.40 444.65,631.40 445.14,631.40 445.64,631.40 446.14,631.40 446.63,631.40 447.13,631.40 447.63,631.40 448.12,631.40 448.62,631.40 449.12,631.40 449.61,631.40 450.11,631.40 450.61,631.40 451.10,631.40 451.60,627.08 452.09,617.10 452.59,607.15 453.09,597.24 453.58,587.39 454.08,577.62 454.58,567.94 455.07,558.37 455.57,548.93 456.07,539.64 456.56,530.51 457.06,521.55 457.56,512.79 458.05,504.23 458.55,495.90 459.05,487.80 459.54,479.96 460.04,472.38 460.54,465.08 461.03,458.08 461.53,451.37 462.03,444.99 462.52,438.93 463.02,433.21 463.52,427.83 464.01,422.81 464.51,418.16 465.01,413.89 465.50,409.99 466.00,406.48 466.50,403.37 466.99,400.66 467.49,398.35 467.99,396.45 468.48,394.97 468.98,393.89 469.48,393.24 469.97,393.00 470.47,393.18 470.97,393.78 471.46,394.80 471.96,396.23 472.46,398.07 472.95,400.32 473.45,402.98 473.95,406.04 474.44,409.49 474.94,413.34 475.44,417.56 475.93,422.16 476.43,427.13 476.93,432.46 477.42,438.13 477.92,444.15 478.41,450.49 478.91,457.15 479.41,464.12 479.90,471.38 480.40,478.92 480.90,486.73 481.39,494.79 481.89,503.09 482.39,511.62 482.88,520.35 483.38,529.28 483.88,538.39 484.37,547.67 484.87,557.09 485.37,566.64 485.86,576.30 486.36,586.07 486.86,595.91 487.35,605.81 487.85,615.76 488.35,625.73 488.84,631.40 489.34,631.40 489.84,631.40 490.33,631.40 490.83,631.40 491.33,631.40 491.82,631.40 492.32,631.40 492.82,631.40 493.31,631.40 493.81,631.40 494.31,631.40 494.80,631.40 495.30,631.40 495.80,631.40 496.29,631.40 496.79,631.40 497.29,631.40 497.78,631.40 498.28,631.40 498.78,631.40 499.27,631.40 499.77,631.40 500.27,631.40 500.76,631.40 501.26,631.40 501.75,631.40 502.25,631.40 502.75,631.40 503.24,631.40 503.74,631.40 504.24,631.40 504.73,631.40 505.23,631.40 505.73,631.40 506.22,631.40 506.72,631.40 507.22,631.40 507.71,631.40 508.21,631.40 508.71,631.40 509.20,631.40 509.70,631.40 510.20,631.40 510.69,631.40 511.19,631.40 511.69,631.40 512.18,631.40 512.68,631.40 513.18,631.40 513.67,631.40 514.17,631.40 514.67,631.40 515.16,631.40 515.66,631.40 516.16,631.40 516.65,631.40 517.15,631.40 517.65,631.40 518.14,631.40 518.64,631.40 519.14,631.40 519.63,631.40 520.13,631.40 520.63,631.40 521.12,631.40 521.62,631.40 522.12,631.40 522.61,631.40 523.11,631.40 523.61,631.40 524.10,631.40 524.60,631.40 525.10,631.40 525.59,631.40 526.09,627.08 526.58,617.10 527.08,607.15 527.58,597.24 528.07,587.39 528.57,577.62 529.07,567.94 529.56,558.37 530.06,548.93 530.56,539.64 531.05,530.51 531.55,521.55 532.05,512.79 532.54,504.23 533.04,495.90 533.54,487.80 534.03,479.96 534.53,472.38 535.03,465.08 535.52,458.08 536.02,451.37 536.52,444.99 537.01,438.93 537.51,433.21 538.01,427.83 538.50,422.81 539.00,418.16 539.50,413.89 539.99,409.99 540.49,406.48 540.99,403.37 541.48,400.66 541.98,398.35 542.48,396.45 542.97,394.97 543.47,393.89 543.97,393.24 544.46,393.00 544.96,393.18 545.46,393.78 545.95,394.80 546.45,396.23 546.95,398.07 547.44,400.32 547.94,402.98 548.44,406.04 548.93,409.49 549.43,413.34 549.93,417.56 550.42,422.16 550.92,427.13 551.41,432.46 551.91,438.13 552.41,444.15 552.90,450.49 553.40,457.15 553.90,464.12 554.39,471.38 554.89,478.92 555.39,486.73 555.88,494.79 556.38,503.09 556.88,511.62 557.37,520.35 557.87,529.28 558.37,538.39 558.86,547.67 559.36,557.09 559.86,566.64 560.35,576.30 560.85,586.07 561.35,595.91 561.84,605.81 562.34,615.76 562.84,625.73 563.33,631.40 563.83,631.40 564.33,631.40 564.82,631.40 565.32,631.40 565.82,631.40 566.31,631.40 566.81,631.40 567.31,631.40 567.80,631.40 568.30,631.40 568.80,631.40 569.29,631.40 569.79,631.40 570.29,631.40 570.78,631.40 571.28,631.40 571.78,631.40 572.27,631.40 572.77,631.40 573.27,631.40 573.76,631.40 574.26,631.40 574.76,631.40 575.25,631.40 575.75,631.40 576.25,631.40 576.74,631.40 577.24,631.40 577.73,631.40 578.23,631.40 578.73,631.40 579.22,631.40 579.72,631.40 580.22,631.40 580.71,631.40 581.21,631.40 581.71,631.40 582.20,631.40 582.70,631.40 583.20,631.40 583.69,631.40 584.19,631.40 584.69,631.40 585.18,631.40 585.68,631.40 586.18,631.40 586.67,631.40 587.17,631.40 587.67,631.40 588.16,631.40 588.66,631.40 589.16,631.40 589.65,631.40 590.15,631.40 590.65,631.40 591.14,631.40 591.64,631.40 592.14,631.40 592.63,631.40 593.13,631.40 593.63,631.40 594.12,631.40 594.62,631.40 595.12,631.40 595.61,631.40 596.11,631.40 596.61,631.40 597.10,631.40 597.60,631.40 598.10,631.40 598.59,631.40 599.09,631.40 599.59,631.40 600.08,631.40 600.58,627.08 601.07,617.10 601.57,607.15 602.07,597.24 602.56,587.39 603.06,577.62 603.56,567.94 604.05,558.37 604.55,548.93 605.05,539.64 605.54,530.51 606.04,521.55 606.54,512.79 607.03,504.23 607.53,495.90 608.03,487.80 608.52,479.96 609.02,472.38 609.52,465.08 610.01,458.08 610.51,451.37 611.01,444.99 611.50,438.93 612.00,433.21 612.50,427.83 612.99,422.81 613.49,418.16 613.99,413.89 614.48,409.99 614.98,406.48 615.48,403.37 615.97,400.66 616.47,398.35 616.97,396.45 617.46,394.97 617.96,393.89 618.46,393.24 618.95,393.00 619.45,393.18 619.95,393.78 620.44,394.80 620.94,396.23 621.44,398.07 621.93,400.32 622.43,402.98 622.93,406.04 623.42,409.49 623.92,413.34 624.42,417.56 624.91,422.16 625.41,427.13 625.90,432.46 626.40,438.13 626.90,444.15 627.39,450.49 627.89,457.15 628.39,464.12 628.88,471.38 629.38,478.92 629.88,486.73 630.37,494.79 630.87,503.09 631.37,511.62 631.86,520.35 632.36,529.28 632.86,538.39 633.35,547.67 633.85,557.09 634.35,566.64 634.84,576.30 635.34,586.07 635.84,595.91 636.33,605.81 636.83,615.76 637.33,625.73 637.82,631.40 638.32,631.40 638.82,631.40 639.31,631.40 639.81,631.40 640.31,631.40 640.80,631.40 641.30,631.40 641.80,631.40 642.29,631.40 642.79,631.40 643.29,631.40 643.78,631.40 644.28,631.40 644.78,631.40 645.27,631.40 645.77,631.40 646.27,631.40 646.76,631.40 647.26,631.40 647.76,631.40 648.25,631.40 648.75,631.40 649.25,631.40 649.74,631.40 650.24,631.40 650.73,631.40 651.23,631.40 651.73,631.40 652.22,631.40 652.72,631.40 653.22,631.40 653.71,631.40 654.21,631.40 654.71,631.40 655.20,631.40 655.70,631.40 656.20,631.40 656.69,631.40 657.19,631.40 657.69,631.40 658.18,631.40 658.68,631.40 659.18,631.40 659.67,631.40 660.17,631.40 660.67,631.40 661.16,631.40 661.66,631.40 662.16,631.40 662.65,631.40 663.15,631.40 663.65,631.40 664.14,631.40 664.64,631.40 665.14,631.40 665.63,631.40 666.13,631.40 666.63,631.40 667.12,631.40 667.62,631.40 668.12,631.40 668.61,631.40 669.11,631.40 669.61,631.40 670.10,631.40 670.60,631.40 671.10,631.40 671.59,631.40 672.09,631.40 672.59,631.40 673.08,631.40 673.58,631.40 674.08,631.40 674.57,631.40 675.07,627.08 675.56,617.10 676.06,607.15 676.56,597.24 677.05,587.39 677.55,577.62 678.05,567.94 678.54,558.37 679.04,548.93 679.54,539.64 680.03,530.51 680.53,521.55 681.03,512.79 681.52,504.23 682.02,495.90 682.52,487.80 683.01,479.96 683.51,472.38 684.01,465.08 684.50,458.08 685.00,451.37 685.50,444.99 685.99,438.93 686.49,433.21 686.99,427.83 687.48,422.81 687.98,418.16 688.48,413.89 688.97,409.99 689.47,406.48 689.97,403.37 690.46,400.66 690.96,398.35 691.46,396.45 691.95,394.97 692.45,393.89 692.95,393.24 693.44,393.00 693.94,393.18 694.44,393.78 694.93,394.80 695.43,396.23 695.93,398.07 696.42,400.32 696.92,402.98 697.42,406.04 697.91,409.49 698.41,413.34 698.91,417.56 699.40,422.16 699.90,427.13 700.39,432.46 700.89,438.13 701.39,444.15 701.88,450.49 702.38,457.15 702.88,464.12 703.37,471.38 703.87,478.92 704.37,486.73 704.86,494.79 705.36,503.09 705.86,511.62 706.35,520.35 706.85,529.28 707.35,538.39 707.84,547.67 708.34,557.09 708.84,566.64 709.33,576.30 709.83,586.07 710.33,595.91 710.82,605.81 711.32,615.76 711.82,625.73 712.31,631.40 712.81,631.40 713.31,631.40 713.80,631.40 714.30,631.40 714.80,631.40 715.29,631.40 715.79,631.40 716.29,631.40 716.78,631.40 717.28,631.40 717.78,631.40 718.27,631.40 718.77,631.40 719.27,631.40 719.76,631.40 720.26,631.40 720.76,631.40 721.25,631.40 721.75,631.40 722.25,631.40 722.74,631.40 723.24,631.40 723.74,631.40 724.23,631.40 724.73,631.40 725.22,631.40 725.72,631.40 726.22,631.40 726.71,631.40 727.21,631.40 727.71,631.40 728.20,631.40 728.70,631.40 729.20,631.40 729.69,631.40 730.19,631.40 730.69,631.40 731.18,631.40 731.68,631.40 732.18,631.40 732.67,631.40 733.17,631.40 733.67,631.40 734.16,631.40 734.66,631.40 735.16,631.40 735.65,631.40 736.15,631.40 736.65,631.40 737.14,631.40 737.64,631.40 738.14,631.40 738.63,631.40 739.13,631.40 739.63,631.40 740.12,631.40 740.62,631.40 741.12,631.40 741.61,631.40 742.11,631.40 742.61,631.40 743.10,631.40 743.60,631.40 744.10,631.40 744.59,631.40 745.09,631.40 745.59,631.40 746.08,631.40 746.58,631.40 747.08,631.40 747.57,631.40 748.07,631.40 748.57,631.40 749.06,631.40 749.56,627.08 750.05,617.10 750.55,607.15 751.05,597.24 751.54,587.39 752.04,577.62 752.54,567.94 753.03,558.37 753.53,548.93 754.03,539.64 754.52,530.51 755.02,521.55 755.52,512.79 756.01,504.23 756.51,495.90 757.01,487.80 757.50,479.96 758.00,472.38 758.50,465.08 758.99,458.08 759.49,451.37 759.99,444.99 760.48,438.93 760.98,433.21 761.48,427.83 761.97,422.81 762.47,418.16 762.97,413.89 763.46,409.99 763.96,406.48 764.46,403.37 764.95,400.66 765.45,398.35 765.95,396.45 766.44,394.97 766.94,393.89 767.44,393.24 767.93,393.00 768.43,393.18 768.93,393.78 769.42,394.80 769.92,396.23 770.42,398.07 770.91,400.32 771.41,402.98 771.91,406.04 772.40,409.49 772.90,413.34 773.40,417.56 773.89,422.16 774.39,427.13 774.88,432.46 775.38,438.13 775.88,444.15 776.37,450.49 776.87,457.15 777.37,464.12 777.86,471.38 778.36,478.92 778.86,486.73 779.35,494.79 779.85,503.09 780.35,511.62 780.84,520.35 781.34,529.28 781.84,538.39 782.33,547.67 782.83,557.09 783.33,566.64 783.82,576.30 784.32,586.07 784.82,595.91 785.31,605.81 785.81,615.76 786.31,625.73 786.80,631.40 787.30,631.40" fill="none" stroke="#b040c4" stroke-width="1.2"/><polyline points="42.40,617.21 42.90,607.33 43.39,597.50 43.89,587.72 44.39,578.02 44.88,568.42 45.38,558.92 45.88,549.55 46.37,540.33 46.87,531.26 47.37,522.37 47.86,513.67 48.36,505.18 48.86,496.91 49.35,488.88 49.85,481.09 50.35,473.57 50.84,466.33 51.34,459.38 51.84,452.72 52.33,446.39 52.83,440.37 53.33,434.69 53.82,429.36 54.32,424.38 54.81,419.76 55.31,415.52 55.81,411.65 56.30,408.17 56.80,405.08 57.30,402.39 57.79,400.10 58.29,398.21 58.79,396.74 59.28,395.67 59.78,395.02 60.28,394.79 60.77,394.97 61.27,395.56 61.77,396.57 62.26,397.99 62.76,399.82 63.26,402.06 63.75,404.69 64.25,407.73 64.75,411.16 65.24,414.97 65.74,419.17 66.24,423.73 66.73,428.66 67.23,433.95 67.73,439.58 68.22,445.55 68.72,451.85 69.22,458.46 69.71,465.37 70.21,472.58 70.71,480.06 71.20,487.81 71.70,495.81 72.20,504.05 72.69,512.51 73.19,521.19 73.69,530.05 74.18,539.09 74.68,548.30 75.18,557.65 75.67,567.13 76.17,576.72 76.67,586.41 77.16,596.17 77.66,606.00 78.16,615.87 78.65,625.77 79.15,631.40 79.64,631.40 80.14,631.40 80.64,631.40 81.13,631.40 81.63,631.40 82.13,631.40 82.62,631.40 83.12,631.40 83.62,631.40 84.11,631.40 84.61,631.40 85.11,631.40 85.60,631.40 86.10,631.40 86.60,631.40 87.09,631.40 87.59,631.40 88.09,631.40 88.58,631.40 89.08,631.40 89.58,631.40 90.07,631.40 90.57,631.40 91.07,631.40 91.56,631.40 92.06,631.40 92.56,631.40 93.05,631.40 93.55,631.40 94.05,631.40 94.54,631.40 95.04,631.40 95.54,631.40 96.03,631.40 96.53,631.40 97.03,631.40 97.52,631.40 98.02,631.40 98.52,631.40 99.01,631.40 99.51,631.40 100.01,631.40 100.50,631.40 101.00,631.40 101.50,631.40 101.99,631.40 102.49,631.40 102.99,631.40 103.48,631.40 103.98,631.40 104.47,631.40 104.97,631.40 105.47,631.40 105.96,631.40 106.46,631.40 106.96,631.40 107.45,631.40 107.95,631.40 108.45,631.40 108.94,631.40 109.44,631.40 109.94,631.40 110.43,631.40 110.93,631.40 111.43,631.40 111.92,631.40 112.42,631.40 112.92,631.40 113.41,631.40 113.91,631.40 114.41,631.40 114.90,631.40 115.40,631.40 115.90,631.40 116.39,627.11 116.89,617.21 117.39,607.33 117.88,597.50 118.38,587.72 118.88,578.02 119.37,568.42 119.87,558.92 120.37,549.55 120.86,540.33 121.36,531.26 121.86,522.37 122.35,513.67 122.85,505.18 123.35,496.91 123.84,488.88 124.34,481.09 124.84,473.57 125.33,466.33 125.83,459.38 126.33,452.72 126.82,446.39 127.32,440.37 127.82,434.69 128.31,429.36 128.81,424.38 129.31,419.76 129.80,415.52 130.30,411.65 130.79,408.17 131.29,405.08 131.79,402.39 132.28,400.10 132.78,398.21 133.28,396.74 133.77,395.67 134.27,395.02 134.77,394.79 135.26,394.97 135.76,395.56 136.26,396.57 136.75,397.99 137.25,399.82 137.75,402.06 138.24,404.69 138.74,407.73 139.24,411.16 139.73,414.97 140.23,419.17 140.73,423.73 141.22,428.66 141.72,433.95 142.22,439.58 142.71,445.55 143.21,451.85 143.71,458.46 144.20,465.37 144.70,472.58 145.20,480.06 145.69,487.81 146.19,495.81 146.69,504.05 147.18,512.51 147.68,521.19 148.18,530.05 148.67,539.09 149.17,548.30 149.67,557.65 150.16,567.13 150.66,576.72 151.16,586.41 151.65,596.17 152.15,606.00 152.65,615.87 153.14,625.77 153.64,631.40 154.13,631.40 154.63,631.40 155.13,631.40 155.62,631.40 156.12,631.40 156.62,631.40 157.11,631.40 157.61,631.40 158.11,631.40 158.60,631.40 159.10,631.40 159.60,631.40 160.09,631.40 160.59,631.40 161.09,631.40 161.58,631.40 162.08,631.40 162.58,631.40 163.07,631.40 163.57,631.40 164.07,631.40 164.56,631.40 165.06,631.40 165.56,631.40 166.05,631.40 166.55,631.40 167.05,631.40 167.54,631.40 168.04,631.40 168.54,631.40 169.03,631.40 169.53,631.40 170.03,631.40 170.52,631.40 171.02,631.40 171.52,631.40 172.01,631.40 172.51,631.40 173.01,631.40 173.50,631.40 174.00,631.40 174.50,631.40 174.99,631.40 175.49,631.40 175.99,631.40 176.48,631.40 176.98,631.40 177.48,631.40 177.97,631.40 178.47,631.40 178.97,631.40 179.46,631.40 179.96,631.40 180.45,631.40 180.95,631.40 181.45,631.40 181.94,631.40 182.44,631.40 182.94,631.40 183.43,631.40 183.93,631.40 184.43,631.40 184.92,631.40 185.42,631.40 185.92,631.40 186.41,631.40 186.91,631.40 187.41,631.40 187.90,631.40 188.40,631.40 188.90,631.40 189.39,631.40 189.89,631.40 190.39,631.40 190.88,627.11 191.38,617.21 191.88,607.33 192.37,597.50 192.87,587.72 193.37,578.02 193.86,568.42 194.36,558.92 194.86,549.55 195.35,540.33 195.85,531.26 196.35,522.37 196.84,513.67 197.34,505.18 197.84,496.91 198.33,488.88 198.83,481.09 199.33,473.57 199.82,466.33 200.32,459.38 200.82,452.72 201.31,446.39 201.81,440.37 202.31,434.69 202.80,429.36 203.30,424.38 203.80,419.76 204.29,415.52 204.79,411.65 205.28,408.17 205.78,405.08 206.28,402.39 206.77,400.10 207.27,398.21 207.77,396.74 208.26,395.67 208.76,395.02 209.26,394.79 209.75,394.97 210.25,395.56 210.75,396.57 211.24,397.99 211.74,399.82 212.24,402.06 212.73,404.69 213.23,407.73 213.73,411.16 214.22,414.97 214.72,419.17 215.22,423.73 215.71,428.66 216.21,433.95 216.71,439.58 217.20,445.55 217.70,451.85 218.20,458.46 218.69,465.37 219.19,472.58 219.69,480.06 220.18,487.81 220.68,495.81 221.18,504.05 221.67,512.51 222.17,521.19 222.67,530.05 223.16,539.09 223.66,548.30 224.16,557.65 224.65,567.13 225.15,576.72 225.65,586.41 226.14,596.17 226.64,606.00 227.14,615.87 227.63,625.77 228.13,631.40 228.62,631.40 229.12,631.40 229.62,631.40 230.11,631.40 230.61,631.40 231.11,631.40 231.60,631.40 232.10,631.40 232.60,631.40 233.09,631.40 233.59,631.40 234.09,631.40 234.58,631.40 235.08,631.40 235.58,631.40 236.07,631.40 236.57,631.40 237.07,631.40 237.56,631.40 238.06,631.40 238.56,631.40 239.05,631.40 239.55,631.40 240.05,631.40 240.54,631.40 241.04,631.40 241.54,631.40 242.03,631.40 242.53,631.40 243.03,631.40 243.52,631.40 244.02,631.40 244.52,631.40 245.01,631.40 245.51,631.40 246.01,631.40 246.50,631.40 247.00,631.40 247.50,631.40 247.99,631.40 248.49,631.40 248.99,631.40 249.48,631.40 249.98,631.40 250.48,631.40 250.97,631.40 251.47,631.40 251.97,631.40 252.46,631.40 252.96,631.40 253.45,631.40 253.95,631.40 254.45,631.40 254.94,631.40 255.44,631.40 255.94,631.40 256.43,631.40 256.93,631.40 257.43,631.40 257.92,631.40 258.42,631.40 258.92,631.40 259.41,631.40 259.91,631.40 260.41,631.40 260.90,631.40 261.40,631.40 261.90,631.40 262.39,631.40 262.89,631.40 263.39,631.40 263.88,631.40 264.38,631.40 264.88,631.40 265.37,627.11 265.87,617.21 266.37,607.33 266.86,597.50 267.36,587.72 267.86,578.02 268.35,568.42 268.85,558.92 269.35,549.55 269.84,540.33 270.34,531.26 270.84,522.37 271.33,513.67 271.83,505.18 272.33,496.91 272.82,488.88 273.32,481.09 273.82,473.57 274.31,466.33 274.81,459.38 275.31,452.72 275.80,446.39 276.30,440.37 276.80,434.69 277.29,429.36 277.79,424.38 278.28,419.76 278.78,415.52 279.28,411.65 279.77,408.17 280.27,405.08 280.77,402.39 281.26,400.10 281.76,398.21 282.26,396.74 282.75,395.67 283.25,395.02 283.75,394.79 284.24,394.97 284.74,395.56 285.24,396.57 285.73,397.99 286.23,399.82 286.73,402.06 287.22,404.69 287.72,407.73 288.22,411.16 288.71,414.97 289.21,419.17 289.71,423.73 290.20,428.66 290.70,433.95 291.20,439.58 291.69,445.55 292.19,451.85 292.69,458.46 293.18,465.37 293.68,472.58 294.18,480.06 294.67,487.81 295.17,495.81 295.67,504.05 296.16,512.51 296.66,521.19 297.16,530.05 297.65,539.09 298.15,548.30 298.65,557.65 299.14,567.13 299.64,576.72 300.14,586.41 300.63,596.17 301.13,606.00 301.63,615.87 302.12,625.77 302.62,631.40 303.11,631.40 303.61,631.40 304.11,631.40 304.60,631.40 305.10,631.40 305.60,631.40 306.09,631.40 306.59,631.40 307.09,631.40 307.58,631.40 308.08,631.40 308.58,631.40 309.07,631.40 309.57,631.40 310.07,631.40 310.56,631.40 311.06,631.40 311.56,631.40 312.05,631.40 312.55,631.40 313.05,631.40 313.54,631.40 314.04,631.40 314.54,631.40 315.03,631.40 315.53,631.40 316.03,631.40 316.52,631.40 317.02,631.40 317.52,631.40 318.01,631.40 318.51,631.40 319.01,631.40 319.50,631.40 320.00,631.40 320.50,631.40 320.99,631.40 321.49,631.40 321.99,631.40 322.48,631.40 322.98,631.40 323.48,631.40 323.97,631.40 324.47,631.40 324.97,631.40 325.46,631.40 325.96,631.40 326.46,631.40 326.95,631.40 327.45,631.40 327.94,631.40 328.44,631.40 328.94,631.40 329.43,631.40 329.93,631.40 330.43,631.40 330.92,631.40 331.42,631.40 331.92,631.40 332.41,631.40 332.91,631.40 333.41,631.40 333.90,631.40 334.40,631.40 334.90,631.40 335.39,631.40 335.89,631.40 336.39,631.40 336.88,631.40 337.38,631.40 337.88,631.40 338.37,631.40 338.87,631.40 339.37,631.40 339.86,627.11 340.36,617.21 340.86,607.33 341.35,597.50 341.85,587.72 342.35,578.02 342.84,568.42 343.34,558.92 343.84,549.55 344.33,540.33 344.83,531.26 345.33,522.37 345.82,513.67 346.32,505.18 346.82,496.91 347.31,488.88 347.81,481.09 348.31,473.57 348.80,466.33 349.30,459.38 349.80,452.72 350.29,446.39 350.79,440.37 351.29,434.69 351.78,429.36 352.28,424.38 352.77,419.76 353.27,415.52 353.77,411.65 354.26,408.17 354.76,405.08 355.26,402.39 355.75,400.10 356.25,398.21 356.75,396.74 357.24,395.67 357.74,395.02 358.24,394.79 358.73,394.97 359.23,395.56 359.73,396.57 360.22,397.99 360.72,399.82 361.22,402.06 361.71,404.69 362.21,407.73 362.71,411.16 363.20,414.97 363.70,419.17 364.20,423.73 364.69,428.66 365.19,433.95 365.69,439.58 366.18,445.55 366.68,451.85 367.18,458.46 367.67,465.37 368.17,472.58 368.67,480.06 369.16,487.81 369.66,495.81 370.16,504.05 370.65,512.51 371.15,521.19 371.65,530.05 372.14,539.09 372.64,548.30 373.14,557.65 373.63,567.13 374.13,576.72 374.63,586.41 375.12,596.17 375.62,606.00 376.12,615.87 376.61,625.77 377.11,631.40 377.60,631.40 378.10,631.40 378.60,631.40 379.09,631.40 379.59,631.40 380.09,631.40 380.58,631.40 381.08,631.40 381.58,631.40 382.07,631.40 382.57,631.40 383.07,631.40 383.56,631.40 384.06,631.40 384.56,631.40 385.05,631.40 385.55,631.40 386.05,631.40 386.54,631.40 387.04,631.40 387.54,631.40 388.03,631.40 388.53,631.40 389.03,631.40 389.52,631.40 390.02,631.40 390.52,631.40 391.01,631.40 391.51,631.40 392.01,631.40 392.50,631.40 393.00,631.40 393.50,631.40 393.99,631.40 394.49,631.40 394.99,631.40 395.48,631.40 395.98,631.40 396.48,631.40 396.97,631.40 397.47,631.40 397.97,631.40 398.46,631.40 398.96,631.40 399.46,631.40 399.95,631.40 400.45,631.40 400.95,631.40 401.44,631.40 401.94,631.40 402.43,631.40 402.93,631.40 403.43,631.40 403.92,631.40 404.42,631.40 404.92,631.40 405.41,631.40 405.91,631.40 406.41,631.40 406.90,631.40 407.40,631.40 407.90,631.40 408.39,631.40 408.89,631.40 409.39,631.40 409.88,631.40 410.38,631.40 410.88,631.40 411.37,631.40 411.87,631.40 412.37,631.40 412.86,631.40 413.36,631.40 413.86,631.40 414.35,627.11 414.85,617.21 415.35,607.33 415.84,597.50 416.34,587.72 416.84,578.02 417.33,568.42 417.83,558.92 418.33,549.55 418.82,540.33 419.32,531.26 419.82,522.37 420.31,513.67 420.81,505.18 421.31,496.91 421.80,488.88 422.30,481.09 422.80,473.57 423.29,466.33 423.79,459.38 424.29,452.72 424.78,446.39 425.28,440.37 425.78,434.69 426.27,429.36 426.77,424.38 427.26,419.76 427.76,415.52 428.26,411.65 428.75,408.17 429.25,405.08 429.75,402.39 430.24,400.10 430.74,398.21 431.24,396.74 431.73,395.67 432.23,395.02 432.73,394.79 433.22,394.97 433.72,395.56 434.22,396.57 434.71,397.99 435.21,399.82 435.71,402.06 436.20,404.69 436.70,407.73 437.20,411.16 437.69,414.97 438.19,419.17 438.69,423.73 439.18,428.66 439.68,433.95 440.18,439.58 440.67,445.55 441.17,451.85 441.67,458.46 442.16,465.37 442.66,472.58 443.16,480.06 443.65,487.81 444.15,495.81 444.65,504.05 445.14,512.51 445.64,521.19 446.14,530.05 446.63,539.09 447.13,548.30 447.63,557.65 448.12,567.13 448.62,576.72 449.12,586.41 449.61,596.17 450.11,606.00 450.61,615.87 451.10,625.77 451.60,631.40 452.09,631.40 452.59,631.40 453.09,631.40 453.58,631.40 454.08,631.40 454.58,631.40 455.07,631.40 455.57,631.40 456.07,631.40 456.56,631.40 457.06,631.40 457.56,631.40 458.05,631.40 458.55,631.40 459.05,631.40 459.54,631.40 460.04,631.40 460.54,631.40 461.03,631.40 461.53,631.40 462.03,631.40 462.52,631.40 463.02,631.40 463.52,631.40 464.01,631.40 464.51,631.40 465.01,631.40 465.50,631.40 466.00,631.40 466.50,631.40 466.99,631.40 467.49,631.40 467.99,631.40 468.48,631.40 468.98,631.40 469.48,631.40 469.97,631.40 470.47,631.40 470.97,631.40 471.46,631.40 471.96,631.40 472.46,631.40 472.95,631.40 473.45,631.40 473.95,631.40 474.44,631.40 474.94,631.40 475.44,631.40 475.93,631.40 476.43,631.40 476.93,631.40 477.42,631.40 477.92,631.40 478.41,631.40 478.91,631.40 479.41,631.40 479.90,631.40 480.40,631.40 480.90,631.40 481.39,631.40 481.89,631.40 482.39,631.40 482.88,631.40 483.38,631.40 483.88,631.40 484.37,631.40 484.87,631.40 485.37,631.40 485.86,631.40 486.36,631.40 486.86,631.40 487.35,631.40 487.85,631.40 488.35,631.40 488.84,627.11 489.34,617.21 489.84,607.33 490.33,597.50 490.83,587.72 491.33,578.02 491.82,568.42 492.32,558.92 492.82,549.55 493.31,540.33 493.81,531.26 494.31,522.37 494.80,513.67 495.30,505.18 495.80,496.91 496.29,488.88 496.79,481.09 497.29,473.57 497.78,466.33 498.28,459.38 498.78,452.72 499.27,446.39 499.77,440.37 500.27,434.69 500.76,429.36 501.26,424.38 501.75,419.76 502.25,415.52 502.75,411.65 503.24,408.17 503.74,405.08 504.24,402.39 504.73,400.10 505.23,398.21 505.73,396.74 506.22,395.67 506.72,395.02 507.22,394.79 507.71,394.97 508.21,395.56 508.71,396.57 509.20,397.99 509.70,399.82 510.20,402.06 510.69,404.69 511.19,407.73 511.69,411.16 512.18,414.97 512.68,419.17 513.18,423.73 513.67,428.66 514.17,433.95 514.67,439.58 515.16,445.55 515.66,451.85 516.16,458.46 516.65,465.37 517.15,472.58 517.65,480.06 518.14,487.81 518.64,495.81 519.14,504.05 519.63,512.51 520.13,521.19 520.63,530.05 521.12,539.09 521.62,548.30 522.12,557.65 522.61,567.13 523.11,576.72 523.61,586.41 524.10,596.17 524.60,606.00 525.10,615.87 525.59,625.77 526.09,631.40 526.58,631.40 527.08,631.40 527.58,631.40 528.07,631.40 528.57,631.40 529.07,631.40 529.56,631.40 530.06,631.40 530.56,631.40 531.05,631.40 531.55,631.40 532.05,631.40 532.54,631.40 533.04,631.40 533.54,631.40 534.03,631.40 534.53,631.40 535.03,631.40 535.52,631.40 536.02,631.40 536.52,631.40 537.01,631.40 537.51,631.40 538.01,631.40 538.50,631.40 539.00,631.40 539.50,631.40 539.99,631.40 540.49,631.40 540.99,631.40 541.48,631.40 541.98,631.40 542.48,631.40 542.97,631.40 543.47,631.40 543.97,631.40 544.46,631.40 544.96,631.40 545.46,631.40 545.95,631.40 546.45,631.40 546.95,631.40 547.44,631.40 547.94,631.40 548.44,631.40 548.93,631.40 549.43,631.40 549.93,631.40 550.42,631.40 550.92,631.40 551.41,631.40 551.91,631.40 552.41,631.40 552.90,631.40 553.40,631.40 553.90,631.40 554.39,631.40 554.89,631.40 555.39,631.40 555.88,631.40 556.38,631.40 556.88,631.40 557.37,631.40 557.87,631.40 558.37,631.40 558.86,631.40 559.36,631.40 559.86,631.40 560.35,631.40 560.85,631.40 561.35,631.40 561.84,631.40 562.34,631.40 562.84,631.40 563.33,627.11 563.83,617.21 564.33,607.33 564.82,597.50 565.32,587.72 565.82,578.02 566.31,568.42 566.81,558.92 567.31,549.55 567.80,540.33 568.30,531.26 568.80,522.37 569.29,513.67 569.79,505.18 570.29,496.91 570.78,488.88 571.28,481.09 571.78,473.57 572.27,466.33 572.77,459.38 573.27,452.72 573.76,446.39 574.26,440.37 574.76,434.69 575.25,429.36 575.75,424.38 576.25,419.76 576.74,415.52 577.24,411.65 577.73,408.17 578.23,405.08 578.73,402.39 579.22,400.10 579.72,398.21 580.22,396.74 580.71,395.67 581.21,395.02 581.71,394.79 582.20,394.97 582.70,395.56 583.20,396.57 583.69,397.99 584.19,399.82 584.69,402.06 585.18,404.69 585.68,407.73 586.18,411.16 586.67,414.97 587.17,419.17 587.67,423.73 588.16,428.66 588.66,433.95 589.16,439.58 589.65,445.55 590.15,451.85 590.65,458.46 591.14,465.37 591.64,472.58 592.14,480.06 592.63,487.81 593.13,495.81 593.63,504.05 594.12,512.51 594.62,521.19 595.12,530.05 595.61,539.09 596.11,548.30 596.61,557.65 597.10,567.13 597.60,576.72 598.10,586.41 598.59,596.17 599.09,606.00 599.59,615.87 600.08,625.77 600.58,631.40 601.07,631.40 601.57,631.40 602.07,631.40 602.56,631.40 603.06,631.40 603.56,631.40 604.05,631.40 604.55,631.40 605.05,631.40 605.54,631.40 606.04,631.40 606.54,631.40 607.03,631.40 607.53,631.40 608.03,631.40 608.52,631.40 609.02,631.40 609.52,631.40 610.01,631.40 610.51,631.40 611.01,631.40 611.50,631.40 612.00,631.40 612.50,631.40 612.99,631.40 613.49,631.40 613.99,631.40 614.48,631.40 614.98,631.40 615.48,631.40 615.97,631.40 616.47,631.40 616.97,631.40 617.46,631.40 617.96,631.40 618.46,631.40 618.95,631.40 619.45,631.40 619.95,631.40 620.44,631.40 620.94,631.40 621.44,631.40 621.93,631.40 622.43,631.40 622.93,631.40 623.42,631.40 623.92,631.40 624.42,631.40 624.91,631.40 625.41,631.40 625.90,631.40 626.40,631.40 626.90,631.40 627.39,631.40 627.89,631.40 628.39,631.40 628.88,631.40 629.38,631.40 629.88,631.40 630.37,631.40 630.87,631.40 631.37,631.40 631.86,631.40 632.36,631.40 632.86,631.40 633.35,631.40 633.85,631.40 634.35,631.40 634.84,631.40 635.34,631.40 635.84,631.40 636.33,631.40 636.83,631.40 637.33,631.40 637.82,627.11 638.32,617.21 638.82,607.33 639.31,597.50 639.81,587.72 640.31,578.02 640.80,568.42 641.30,558.92 641.80,549.55 642.29,540.33 642.79,531.26 643.29,522.37 643.78,513.67 644.28,505.18 644.78,496.91 645.27,488.88 645.77,481.09 646.27,473.57 646.76,466.33 647.26,459.38 647.76,452.72 648.25,446.39 648.75,440.37 649.25,434.69 649.74,429.36 650.24,424.38 650.73,419.76 651.23,415.52 651.73,411.65 652.22,408.17 652.72,405.08 653.22,402.39 653.71,400.10 654.21,398.21 654.71,396.74 655.20,395.67 655.70,395.02 656.20,394.79 656.69,394.97 657.19,395.56 657.69,396.57 658.18,397.99 658.68,399.82 659.18,402.06 659.67,404.69 660.17,407.73 660.67,411.16 661.16,414.97 661.66,419.17 662.16,423.73 662.65,428.66 663.15,433.95 663.65,439.58 664.14,445.55 664.64,451.85 665.14,458.46 665.63,465.37 666.13,472.58 666.63,480.06 667.12,487.81 667.62,495.81 668.12,504.05 668.61,512.51 669.11,521.19 669.61,530.05 670.10,539.09 670.60,548.30 671.10,557.65 671.59,567.13 672.09,576.72 672.59,586.41 673.08,596.17 673.58,606.00 674.08,615.87 674.57,625.77 675.07,631.40 675.56,631.40 676.06,631.40 676.56,631.40 677.05,631.40 677.55,631.40 678.05,631.40 678.54,631.40 679.04,631.40 679.54,631.40 680.03,631.40 680.53,631.40 681.03,631.40 681.52,631.40 682.02,631.40 682.52,631.40 683.01,631.40 683.51,631.40 684.01,631.40 684.50,631.40 685.00,631.40 685.50,631.40 685.99,631.40 686.49,631.40 686.99,631.40 687.48,631.40 687.98,631.40 688.48,631.40 688.97,631.40 689.47,631.40 689.97,631.40 690.46,631.40 690.96,631.40 691.46,631.40 691.95,631.40 692.45,631.40 692.95,631.40 693.44,631.40 693.94,631.40 694.44,631.40 694.93,631.40 695.43,631.40 695.93,631.40 696.42,631.40 696.92,631.40 697.42,631.40 697.91,631.40 698.41,631.40 698.91,631.40 699.40,631.40 699.90,631.40 700.39,631.40 700.89,631.40 701.39,631.40 701.88,631.40 702.38,631.40 702.88,631.40 703.37,631.40 703.87,631.40 704.37,631.40 704.86,631.40 705.36,631.40 705.86,631.40 706.35,631.40 706.85,631.40 707.35,631.40 707.84,631.40 708.34,631.40 708.84,631.40 709.33,631.40 709.83,631.40 710.33,631.40 710.82,631.40 711.32,631.40 711.82,631.40 712.31,627.11 712.81,617.21 713.31,607.33 713.80,597.50 714.30,587.72 714.80,578.02 715.29,568.42 715.79,558.92 716.29,549.55 716.78,540.33 717.28,531.26 717.78,522.37 718.27,513.67 718.77,505.18 719.27,496.91 719.76,488.88 720.26,481.09 720.76,473.57 721.25,466.33 721.75,459.38 722.25,452.72 722.74,446.39 723.24,440.37 723.74,434.69 724.23,429.36 724.73,424.38 725.22,419.76 725.72,415.52 726.22,411.65 726.71,408.17 727.21,405.08 727.71,402.39 728.20,400.10 728.70,398.21 729.20,396.74 729.69,395.67 730.19,395.02 730.69,394.79 731.18,394.97 731.68,395.56 732.18,396.57 732.67,397.99 733.17,399.82 733.67,402.06 734.16,404.69 734.66,407.73 735.16,411.16 735.65,414.97 736.15,419.17 736.65,423.73 737.14,428.66 737.64,433.95 738.14,439.58 738.63,445.55 739.13,451.85 739.63,458.46 740.12,465.37 740.62,472.58 741.12,480.06 741.61,487.81 742.11,495.81 742.61,504.05 743.10,512.51 743.60,521.19 744.10,530.05 744.59,539.09 745.09,548.30 745.59,557.65 746.08,567.13 746.58,576.72 747.08,586.41 747.57,596.17 748.07,606.00 748.57,615.87 749.06,625.77 749.56,631.40 750.05,631.40 750.55,631.40 751.05,631.40 751.54,631.40 752.04,631.40 752.54,631.40 753.03,631.40 753.53,631.40 754.03,631.40 754.52,631.40 755.02,631.40 755.52,631.40 756.01,631.40 756.51,631.40 757.01,631.40 757.50,631.40 758.00,631.40 758.50,631.40 758.99,631.40 759.49,631.40 759.99,631.40 760.48,631.40 760.98,631.40 761.48,631.40 761.97,631.40 762.47,631.40 762.97,631.40 763.46,631.40 763.96,631.40 764.46,631.40 764.95,631.40 765.45,631.40 765.95,631.40 766.44,631.40 766.94,631.40 767.44,631.40 767.93,631.40 768.43,631.40 768.93,631.40 769.42,631.40 769.92,631.40 770.42,631.40 770.91,631.40 771.41,631.40 771.91,631.40 772.40,631.40 772.90,631.40 773.40,631.40 773.89,631.40 774.39,631.40 774.88,631.40 775.38,631.40 775.88,631.40 776.37,631.40 776.87,631.40 777.37,631.40 777.86,631.40 778.36,631.40 778.86,631.40 779.35,631.40 779.85,631.40 780.35,631.40 780.84,631.40 781.34,631.40 781.84,631.40 782.33,631.40 782.83,631.40 783.33,631.40 783.82,631.40 784.32,631.40 784.82,631.40 785.31,631.40 785.81,631.40 786.31,631.40 786.80,627.11 787.30,617.21" fill="none" stroke="#b02424" stroke-width="1.3"/></g><g clip-path="url(#pc3)"><polyline points="42.40,766.55 42.90,762.30 43.39,758.07 43.89,753.86 44.39,749.67 44.88,745.52 45.38,741.42 45.88,737.37 46.37,733.37 46.87,729.44 47.37,725.58 47.86,721.79 48.36,718.10 48.86,714.49 49.35,710.98 49.85,707.58 50.35,704.28 50.84,701.10 51.34,698.04 51.84,695.11 52.33,692.31 52.83,689.64 53.33,687.12 53.82,684.74 54.32,682.51 54.81,680.44 55.31,678.52 55.81,676.76 56.30,675.17 56.80,673.74 57.30,672.49 57.79,671.40 58.29,670.49 58.79,669.75 59.28,669.19 59.78,668.80 60.28,668.59 60.77,668.56 61.27,668.71 61.77,669.04 62.26,669.54 62.76,670.22 63.26,671.08 63.75,672.11 64.25,673.31 64.75,674.68 65.24,676.22 65.74,677.92 66.24,679.79 66.73,681.81 67.23,683.99 67.73,686.32 68.22,688.80 68.72,691.41 69.22,694.17 69.71,697.06 70.21,700.08 70.71,703.22 71.20,706.48 71.70,709.85 72.20,713.32 72.69,716.90 73.19,720.57 73.69,724.32 74.18,728.16 74.68,732.07 75.18,736.05 75.67,740.08 76.17,744.17 76.67,748.30 77.16,752.48 77.66,756.68 78.16,760.91 78.65,765.15 79.15,769.40 79.64,773.65 80.14,777.90 80.64,782.13 81.13,786.34 81.63,790.53 82.13,794.68 82.62,798.78 83.12,802.83 83.62,806.83 84.11,810.76 84.61,814.62 85.11,818.41 85.60,822.10 86.10,825.71 86.60,829.22 87.09,832.62 87.59,835.92 88.09,839.10 88.58,842.16 89.08,845.09 89.58,847.89 90.07,850.56 90.57,853.08 91.07,855.46 91.56,857.69 92.06,859.76 92.56,861.68 93.05,863.44 93.55,865.03 94.05,866.46 94.54,867.71 95.04,868.80 95.54,869.71 96.03,870.45 96.53,871.01 97.03,871.40 97.52,871.61 98.02,871.64 98.52,871.49 99.01,871.16 99.51,870.66 100.01,869.98 100.50,869.12 101.00,868.09 101.50,866.89 101.99,865.52 102.49,863.98 102.99,862.28 103.48,860.41 103.98,858.39 104.47,856.21 104.97,853.88 105.47,851.40 105.96,848.79 106.46,846.03 106.96,843.14 107.45,840.12 107.95,836.98 108.45,833.72 108.94,830.35 109.44,826.88 109.94,823.30 110.43,819.63 110.93,815.88 111.43,812.04 111.92,808.13 112.42,804.15 112.92,800.12 113.41,796.03 113.91,791.90 114.41,787.72 114.90,783.52 115.40,779.29 115.90,775.05 116.39,770.80 116.89,766.55 117.39,762.30 117.88,758.07 118.38,753.86 118.88,749.67 119.37,745.52 119.87,741.42 120.37,737.37 120.86,733.37 121.36,729.44 121.86,725.58 122.35,721.79 122.85,718.10 123.35,714.49 123.84,710.98 124.34,707.58 124.84,704.28 125.33,701.10 125.83,698.04 126.33,695.11 126.82,692.31 127.32,689.64 127.82,687.12 128.31,684.74 128.81,682.51 129.31,680.44 129.80,678.52 130.30,676.76 130.79,675.17 131.29,673.74 131.79,672.49 132.28,671.40 132.78,670.49 133.28,669.75 133.77,669.19 134.27,668.80 134.77,668.59 135.26,668.56 135.76,668.71 136.26,669.04 136.75,669.54 137.25,670.22 137.75,671.08 138.24,672.11 138.74,673.31 139.24,674.68 139.73,676.22 140.23,677.92 140.73,679.79 141.22,681.81 141.72,683.99 142.22,686.32 142.71,688.80 143.21,691.41 143.71,694.17 144.20,697.06 144.70,700.08 145.20,703.22 145.69,706.48 146.19,709.85 146.69,713.32 147.18,716.90 147.68,720.57 148.18,724.32 148.67,728.16 149.17,732.07 149.67,736.05 150.16,740.08 150.66,744.17 151.16,748.30 151.65,752.48 152.15,756.68 152.65,760.91 153.14,765.15 153.64,769.40 154.13,773.65 154.63,777.90 155.13,782.13 155.62,786.34 156.12,790.53 156.62,794.68 157.11,798.78 157.61,802.83 158.11,806.83 158.60,810.76 159.10,814.62 159.60,818.41 160.09,822.10 160.59,825.71 161.09,829.22 161.58,832.62 162.08,835.92 162.58,839.10 163.07,842.16 163.57,845.09 164.07,847.89 164.56,850.56 165.06,853.08 165.56,855.46 166.05,857.69 166.55,859.76 167.05,861.68 167.54,863.44 168.04,865.03 168.54,866.46 169.03,867.71 169.53,868.80 170.03,869.71 170.52,870.45 171.02,871.01 171.52,871.40 172.01,871.61 172.51,871.64 173.01,871.49 173.50,871.16 174.00,870.66 174.50,869.98 174.99,869.12 175.49,868.09 175.99,866.89 176.48,865.52 176.98,863.98 177.48,862.28 177.97,860.41 178.47,858.39 178.97,856.21 179.46,853.88 179.96,851.40 180.45,848.79 180.95,846.03 181.45,843.14 181.94,840.12 182.44,836.98 182.94,833.72 183.43,830.35 183.93,826.88 184.43,823.30 184.92,819.63 185.42,815.88 185.92,812.04 186.41,808.13 186.91,804.15 187.41,800.12 187.90,796.03 188.40,791.90 188.90,787.72 189.39,783.52 189.89,779.29 190.39,775.05 190.88,770.80 191.38,766.55 191.88,762.30 192.37,758.07 192.87,753.86 193.37,749.67 193.86,745.52 194.36,741.42 194.86,737.37 195.35,733.37 195.85,729.44 196.35,725.58 196.84,721.79 197.34,718.10 197.84,714.49 198.33,710.98 198.83,707.58 199.33,704.28 199.82,701.10 200.32,698.04 200.82,695.11 201.31,692.31 201.81,689.64 202.31,687.12 202.80,684.74 203.30,682.51 203.80,680.44 204.29,678.52 204.79,676.76 205.28,675.17 205.78,673.74 206.28,672.49 206.77,671.40 207.27,670.49 207.77,669.75 208.26,669.19 208.76,668.80 209.26,668.59 209.75,668.56 210.25,668.71 210.75,669.04 211.24,669.54 211.74,670.22 212.24,671.08 212.73,672.11 213.23,673.31 213.73,674.68 214.22,676.22 214.72,677.92 215.22,679.79 215.71,681.81 216.21,683.99 216.71,686.32 217.20,688.80 217.70,691.41 218.20,694.17 218.69,697.06 219.19,700.08 219.69,703.22 220.18,706.48 220.68,709.85 221.18,713.32 221.67,716.90 222.17,720.57 222.67,724.32 223.16,728.16 223.66,732.07 224.16,736.05 224.65,740.08 225.15,744.17 225.65,748.30 226.14,752.48 226.64,756.68 227.14,760.91 227.63,765.15 228.13,769.40 228.62,773.65 229.12,777.90 229.62,782.13 230.11,786.34 230.61,790.53 231.11,794.68 231.60,798.78 232.10,802.83 232.60,806.83 233.09,810.76 233.59,814.62 234.09,818.41 234.58,822.10 235.08,825.71 235.58,829.22 236.07,832.62 236.57,835.92 237.07,839.10 237.56,842.16 238.06,845.09 238.56,847.89 239.05,850.56 239.55,853.08 240.05,855.46 240.54,857.69 241.04,859.76 241.54,861.68 242.03,863.44 242.53,865.03 243.03,866.46 243.52,867.71 244.02,868.80 244.52,869.71 245.01,870.45 245.51,871.01 246.01,871.40 246.50,871.61 247.00,871.64 247.50,871.49 247.99,871.16 248.49,870.66 248.99,869.98 249.48,869.12 249.98,868.09 250.48,866.89 250.97,865.52 251.47,863.98 251.97,862.28 252.46,860.41 252.96,858.39 253.45,856.21 253.95,853.88 254.45,851.40 254.94,848.79 255.44,846.03 255.94,843.14 256.43,840.12 256.93,836.98 257.43,833.72 257.92,830.35 258.42,826.88 258.92,823.30 259.41,819.63 259.91,815.88 260.41,812.04 260.90,808.13 261.40,804.15 261.90,800.12 262.39,796.03 262.89,791.90 263.39,787.72 263.88,783.52 264.38,779.29 264.88,775.05 265.37,770.80 265.87,766.55 266.37,762.30 266.86,758.07 267.36,753.86 267.86,749.67 268.35,745.52 268.85,741.42 269.35,737.37 269.84,733.37 270.34,729.44 270.84,725.58 271.33,721.79 271.83,718.10 272.33,714.49 272.82,710.98 273.32,707.58 273.82,704.28 274.31,701.10 274.81,698.04 275.31,695.11 275.80,692.31 276.30,689.64 276.80,687.12 277.29,684.74 277.79,682.51 278.28,680.44 278.78,678.52 279.28,676.76 279.77,675.17 280.27,673.74 280.77,672.49 281.26,671.40 281.76,670.49 282.26,669.75 282.75,669.19 283.25,668.80 283.75,668.59 284.24,668.56 284.74,668.71 285.24,669.04 285.73,669.54 286.23,670.22 286.73,671.08 287.22,672.11 287.72,673.31 288.22,674.68 288.71,676.22 289.21,677.92 289.71,679.79 290.20,681.81 290.70,683.99 291.20,686.32 291.69,688.80 292.19,691.41 292.69,694.17 293.18,697.06 293.68,700.08 294.18,703.22 294.67,706.48 295.17,709.85 295.67,713.32 296.16,716.90 296.66,720.57 297.16,724.32 297.65,728.16 298.15,732.07 298.65,736.05 299.14,740.08 299.64,744.17 300.14,748.30 300.63,752.48 301.13,756.68 301.63,760.91 302.12,765.15 302.62,769.40 303.11,773.65 303.61,777.90 304.11,782.13 304.60,786.34 305.10,790.53 305.60,794.68 306.09,798.78 306.59,802.83 307.09,806.83 307.58,810.76 308.08,814.62 308.58,818.41 309.07,822.10 309.57,825.71 310.07,829.22 310.56,832.62 311.06,835.92 311.56,839.10 312.05,842.16 312.55,845.09 313.05,847.89 313.54,850.56 314.04,853.08 314.54,855.46 315.03,857.69 315.53,859.76 316.03,861.68 316.52,863.44 317.02,865.03 317.52,866.46 318.01,867.71 318.51,868.80 319.01,869.71 319.50,870.45 320.00,871.01 320.50,871.40 320.99,871.61 321.49,871.64 321.99,871.49 322.48,871.16 322.98,870.66 323.48,869.98 323.97,869.12 324.47,868.09 324.97,866.89 325.46,865.52 325.96,863.98 326.46,862.28 326.95,860.41 327.45,858.39 327.94,856.21 328.44,853.88 328.94,851.40 329.43,848.79 329.93,846.03 330.43,843.14 330.92,840.12 331.42,836.98 331.92,833.72 332.41,830.35 332.91,826.88 333.41,823.30 333.90,819.63 334.40,815.88 334.90,812.04 335.39,808.13 335.89,804.15 336.39,800.12 336.88,796.03 337.38,791.90 337.88,787.72 338.37,783.52 338.87,779.29 339.37,775.05 339.86,770.80 340.36,766.55 340.86,762.30 341.35,758.07 341.85,753.86 342.35,749.67 342.84,745.52 343.34,741.42 343.84,737.37 344.33,733.37 344.83,729.44 345.33,725.58 345.82,721.79 346.32,718.10 346.82,714.49 347.31,710.98 347.81,707.58 348.31,704.28 348.80,701.10 349.30,698.04 349.80,695.11 350.29,692.31 350.79,689.64 351.29,687.12 351.78,684.74 352.28,682.51 352.77,680.44 353.27,678.52 353.77,676.76 354.26,675.17 354.76,673.74 355.26,672.49 355.75,671.40 356.25,670.49 356.75,669.75 357.24,669.19 357.74,668.80 358.24,668.59 358.73,668.56 359.23,668.71 359.73,669.04 360.22,669.54 360.72,670.22 361.22,671.08 361.71,672.11 362.21,673.31 362.71,674.68 363.20,676.22 363.70,677.92 364.20,679.79 364.69,681.81 365.19,683.99 365.69,686.32 366.18,688.80 366.68,691.41 367.18,694.17 367.67,697.06 368.17,700.08 368.67,703.22 369.16,706.48 369.66,709.85 370.16,713.32 370.65,716.90 371.15,720.57 371.65,724.32 372.14,728.16 372.64,732.07 373.14,736.05 373.63,740.08 374.13,744.17 374.63,748.30 375.12,752.48 375.62,756.68 376.12,760.91 376.61,765.15 377.11,769.40 377.60,773.65 378.10,777.90 378.60,782.13 379.09,786.34 379.59,790.53 380.09,794.68 380.58,798.78 381.08,802.83 381.58,806.83 382.07,810.76 382.57,814.62 383.07,818.41 383.56,822.10 384.06,825.71 384.56,829.22 385.05,832.62 385.55,835.92 386.05,839.10 386.54,842.16 387.04,845.09 387.54,847.89 388.03,850.56 388.53,853.08 389.03,855.46 389.52,857.69 390.02,859.76 390.52,861.68 391.01,863.44 391.51,865.03 392.01,866.46 392.50,867.71 393.00,868.80 393.50,869.71 393.99,870.45 394.49,871.01 394.99,871.40 395.48,871.61 395.98,871.64 396.48,871.49 396.97,871.16 397.47,870.66 397.97,869.98 398.46,869.12 398.96,868.09 399.46,866.89 399.95,865.52 400.45,863.98 400.95,862.28 401.44,860.41 401.94,858.39 402.43,856.21 402.93,853.88 403.43,851.40 403.92,848.79 404.42,846.03 404.92,843.14 405.41,840.12 405.91,836.98 406.41,833.72 406.90,830.35 407.40,826.88 407.90,823.30 408.39,819.63 408.89,815.88 409.39,812.04 409.88,808.13 410.38,804.15 410.88,800.12 411.37,796.03 411.87,791.90 412.37,787.72 412.86,783.52 413.36,779.29 413.86,775.05 414.35,770.80 414.85,766.55 415.35,762.30 415.84,758.07 416.34,753.86 416.84,749.67 417.33,745.52 417.83,741.42 418.33,737.37 418.82,733.37 419.32,729.44 419.82,725.58 420.31,721.79 420.81,718.10 421.31,714.49 421.80,710.98 422.30,707.58 422.80,704.28 423.29,701.10 423.79,698.04 424.29,695.11 424.78,692.31 425.28,689.64 425.78,687.12 426.27,684.74 426.77,682.51 427.26,680.44 427.76,678.52 428.26,676.76 428.75,675.17 429.25,673.74 429.75,672.49 430.24,671.40 430.74,670.49 431.24,669.75 431.73,669.19 432.23,668.80 432.73,668.59 433.22,668.56 433.72,668.71 434.22,669.04 434.71,669.54 435.21,670.22 435.71,671.08 436.20,672.11 436.70,673.31 437.20,674.68 437.69,676.22 438.19,677.92 438.69,679.79 439.18,681.81 439.68,683.99 440.18,686.32 440.67,688.80 441.17,691.41 441.67,694.17 442.16,697.06 442.66,700.08 443.16,703.22 443.65,706.48 444.15,709.85 444.65,713.32 445.14,716.90 445.64,720.57 446.14,724.32 446.63,728.16 447.13,732.07 447.63,736.05 448.12,740.08 448.62,744.17 449.12,748.30 449.61,752.48 450.11,756.68 450.61,760.91 451.10,765.15 451.60,769.40 452.09,773.65 452.59,777.90 453.09,782.13 453.58,786.34 454.08,790.53 454.58,794.68 455.07,798.78 455.57,802.83 456.07,806.83 456.56,810.76 457.06,814.62 457.56,818.41 458.05,822.10 458.55,825.71 459.05,829.22 459.54,832.62 460.04,835.92 460.54,839.10 461.03,842.16 461.53,845.09 462.03,847.89 462.52,850.56 463.02,853.08 463.52,855.46 464.01,857.69 464.51,859.76 465.01,861.68 465.50,863.44 466.00,865.03 466.50,866.46 466.99,867.71 467.49,868.80 467.99,869.71 468.48,870.45 468.98,871.01 469.48,871.40 469.97,871.61 470.47,871.64 470.97,871.49 471.46,871.16 471.96,870.66 472.46,869.98 472.95,869.12 473.45,868.09 473.95,866.89 474.44,865.52 474.94,863.98 475.44,862.28 475.93,860.41 476.43,858.39 476.93,856.21 477.42,853.88 477.92,851.40 478.41,848.79 478.91,846.03 479.41,843.14 479.90,840.12 480.40,836.98 480.90,833.72 481.39,830.35 481.89,826.88 482.39,823.30 482.88,819.63 483.38,815.88 483.88,812.04 484.37,808.13 484.87,804.15 485.37,800.12 485.86,796.03 486.36,791.90 486.86,787.72 487.35,783.52 487.85,779.29 488.35,775.05 488.84,770.80 489.34,766.55 489.84,762.30 490.33,758.07 490.83,753.86 491.33,749.67 491.82,745.52 492.32,741.42 492.82,737.37 493.31,733.37 493.81,729.44 494.31,725.58 494.80,721.79 495.30,718.10 495.80,714.49 496.29,710.98 496.79,707.58 497.29,704.28 497.78,701.10 498.28,698.04 498.78,695.11 499.27,692.31 499.77,689.64 500.27,687.12 500.76,684.74 501.26,682.51 501.75,680.44 502.25,678.52 502.75,676.76 503.24,675.17 503.74,673.74 504.24,672.49 504.73,671.40 505.23,670.49 505.73,669.75 506.22,669.19 506.72,668.80 507.22,668.59 507.71,668.56 508.21,668.71 508.71,669.04 509.20,669.54 509.70,670.22 510.20,671.08 510.69,672.11 511.19,673.31 511.69,674.68 512.18,676.22 512.68,677.92 513.18,679.79 513.67,681.81 514.17,683.99 514.67,686.32 515.16,688.80 515.66,691.41 516.16,694.17 516.65,697.06 517.15,700.08 517.65,703.22 518.14,706.48 518.64,709.85 519.14,713.32 519.63,716.90 520.13,720.57 520.63,724.32 521.12,728.16 521.62,732.07 522.12,736.05 522.61,740.08 523.11,744.17 523.61,748.30 524.10,752.48 524.60,756.68 525.10,760.91 525.59,765.15 526.09,769.40 526.58,773.65 527.08,777.90 527.58,782.13 528.07,786.34 528.57,790.53 529.07,794.68 529.56,798.78 530.06,802.83 530.56,806.83 531.05,810.76 531.55,814.62 532.05,818.41 532.54,822.10 533.04,825.71 533.54,829.22 534.03,832.62 534.53,835.92 535.03,839.10 535.52,842.16 536.02,845.09 536.52,847.89 537.01,850.56 537.51,853.08 538.01,855.46 538.50,857.69 539.00,859.76 539.50,861.68 539.99,863.44 540.49,865.03 540.99,866.46 541.48,867.71 541.98,868.80 542.48,869.71 542.97,870.45 543.47,871.01 543.97,871.40 544.46,871.61 544.96,871.64 545.46,871.49 545.95,871.16 546.45,870.66 546.95,869.98 547.44,869.12 547.94,868.09 548.44,866.89 548.93,865.52 549.43,863.98 549.93,862.28 550.42,860.41 550.92,858.39 551.41,856.21 551.91,853.88 552.41,851.40 552.90,848.79 553.40,846.03 553.90,843.14 554.39,840.12 554.89,836.98 555.39,833.72 555.88,830.35 556.38,826.88 556.88,823.30 557.37,819.63 557.87,815.88 558.37,812.04 558.86,808.13 559.36,804.15 559.86,800.12 560.35,796.03 560.85,791.90 561.35,787.72 561.84,783.52 562.34,779.29 562.84,775.05 563.33,770.80 563.83,766.55 564.33,762.30 564.82,758.07 565.32,753.86 565.82,749.67 566.31,745.52 566.81,741.42 567.31,737.37 567.80,733.37 568.30,729.44 568.80,725.58 569.29,721.79 569.79,718.10 570.29,714.49 570.78,710.98 571.28,707.58 571.78,704.28 572.27,701.10 572.77,698.04 573.27,695.11 573.76,692.31 574.26,689.64 574.76,687.12 575.25,684.74 575.75,682.51 576.25,680.44 576.74,678.52 577.24,676.76 577.73,675.17 578.23,673.74 578.73,672.49 579.22,671.40 579.72,670.49 580.22,669.75 580.71,669.19 581.21,668.80 581.71,668.59 582.20,668.56 582.70,668.71 583.20,669.04 583.69,669.54 584.19,670.22 584.69,671.08 585.18,672.11 585.68,673.31 586.18,674.68 586.67,676.22 587.17,677.92 587.67,679.79 588.16,681.81 588.66,683.99 589.16,686.32 589.65,688.80 590.15,691.41 590.65,694.17 591.14,697.06 591.64,700.08 592.14,703.22 592.63,706.48 593.13,709.85 593.63,713.32 594.12,716.90 594.62,720.57 595.12,724.32 595.61,728.16 596.11,732.07 596.61,736.05 597.10,740.08 597.60,744.17 598.10,748.30 598.59,752.48 599.09,756.68 599.59,760.91 600.08,765.15 600.58,769.40 601.07,773.65 601.57,777.90 602.07,782.13 602.56,786.34 603.06,790.53 603.56,794.68 604.05,798.78 604.55,802.83 605.05,806.83 605.54,810.76 606.04,814.62 606.54,818.41 607.03,822.10 607.53,825.71 608.03,829.22 608.52,832.62 609.02,835.92 609.52,839.10 610.01,842.16 610.51,845.09 611.01,847.89 611.50,850.56 612.00,853.08 612.50,855.46 612.99,857.69 613.49,859.76 613.99,861.68 614.48,863.44 614.98,865.03 615.48,866.46 615.97,867.71 616.47,868.80 616.97,869.71 617.46,870.45 617.96,871.01 618.46,871.40 618.95,871.61 619.45,871.64 619.95,871.49 620.44,871.16 620.94,870.66 621.44,869.98 621.93,869.12 622.43,868.09 622.93,866.89 623.42,865.52 623.92,863.98 624.42,862.28 624.91,860.41 625.41,858.39 625.90,856.21 626.40,853.88 626.90,851.40 627.39,848.79 627.89,846.03 628.39,843.14 628.88,840.12 629.38,836.98 629.88,833.72 630.37,830.35 630.87,826.88 631.37,823.30 631.86,819.63 632.36,815.88 632.86,812.04 633.35,808.13 633.85,804.15 634.35,800.12 634.84,796.03 635.34,791.90 635.84,787.72 636.33,783.52 636.83,779.29 637.33,775.05 637.82,770.80 638.32,766.55 638.82,762.30 639.31,758.07 639.81,753.86 640.31,749.67 640.80,745.52 641.30,741.42 641.80,737.37 642.29,733.37 642.79,729.44 643.29,725.58 643.78,721.79 644.28,718.10 644.78,714.49 645.27,710.98 645.77,707.58 646.27,704.28 646.76,701.10 647.26,698.04 647.76,695.11 648.25,692.31 648.75,689.64 649.25,687.12 649.74,684.74 650.24,682.51 650.73,680.44 651.23,678.52 651.73,676.76 652.22,675.17 652.72,673.74 653.22,672.49 653.71,671.40 654.21,670.49 654.71,669.75 655.20,669.19 655.70,668.80 656.20,668.59 656.69,668.56 657.19,668.71 657.69,669.04 658.18,669.54 658.68,670.22 659.18,671.08 659.67,672.11 660.17,673.31 660.67,674.68 661.16,676.22 661.66,677.92 662.16,679.79 662.65,681.81 663.15,683.99 663.65,686.32 664.14,688.80 664.64,691.41 665.14,694.17 665.63,697.06 666.13,700.08 666.63,703.22 667.12,706.48 667.62,709.85 668.12,713.32 668.61,716.90 669.11,720.57 669.61,724.32 670.10,728.16 670.60,732.07 671.10,736.05 671.59,740.08 672.09,744.17 672.59,748.30 673.08,752.48 673.58,756.68 674.08,760.91 674.57,765.15 675.07,769.40 675.56,773.65 676.06,777.90 676.56,782.13 677.05,786.34 677.55,790.53 678.05,794.68 678.54,798.78 679.04,802.83 679.54,806.83 680.03,810.76 680.53,814.62 681.03,818.41 681.52,822.10 682.02,825.71 682.52,829.22 683.01,832.62 683.51,835.92 684.01,839.10 684.50,842.16 685.00,845.09 685.50,847.89 685.99,850.56 686.49,853.08 686.99,855.46 687.48,857.69 687.98,859.76 688.48,861.68 688.97,863.44 689.47,865.03 689.97,866.46 690.46,867.71 690.96,868.80 691.46,869.71 691.95,870.45 692.45,871.01 692.95,871.40 693.44,871.61 693.94,871.64 694.44,871.49 694.93,871.16 695.43,870.66 695.93,869.98 696.42,869.12 696.92,868.09 697.42,866.89 697.91,865.52 698.41,863.98 698.91,862.28 699.40,860.41 699.90,858.39 700.39,856.21 700.89,853.88 701.39,851.40 701.88,848.79 702.38,846.03 702.88,843.14 703.37,840.12 703.87,836.98 704.37,833.72 704.86,830.35 705.36,826.88 705.86,823.30 706.35,819.63 706.85,815.88 707.35,812.04 707.84,808.13 708.34,804.15 708.84,800.12 709.33,796.03 709.83,791.90 710.33,787.72 710.82,783.52 711.32,779.29 711.82,775.05 712.31,770.80 712.81,766.55 713.31,762.30 713.80,758.07 714.30,753.86 714.80,749.67 715.29,745.52 715.79,741.42 716.29,737.37 716.78,733.37 717.28,729.44 717.78,725.58 718.27,721.79 718.77,718.10 719.27,714.49 719.76,710.98 720.26,707.58 720.76,704.28 721.25,701.10 721.75,698.04 722.25,695.11 722.74,692.31 723.24,689.64 723.74,687.12 724.23,684.74 724.73,682.51 725.22,680.44 725.72,678.52 726.22,676.76 726.71,675.17 727.21,673.74 727.71,672.49 728.20,671.40 728.70,670.49 729.20,669.75 729.69,669.19 730.19,668.80 730.69,668.59 731.18,668.56 731.68,668.71 732.18,669.04 732.67,669.54 733.17,670.22 733.67,671.08 734.16,672.11 734.66,673.31 735.16,674.68 735.65,676.22 736.15,677.92 736.65,679.79 737.14,681.81 737.64,683.99 738.14,686.32 738.63,688.80 739.13,691.41 739.63,694.17 740.12,697.06 740.62,700.08 741.12,703.22 741.61,706.48 742.11,709.85 742.61,713.32 743.10,716.90 743.60,720.57 744.10,724.32 744.59,728.16 745.09,732.07 745.59,736.05 746.08,740.08 746.58,744.17 747.08,748.30 747.57,752.48 748.07,756.68 748.57,760.91 749.06,765.15 749.56,769.40 750.05,773.65 750.55,777.90 751.05,782.13 751.54,786.34 752.04,790.53 752.54,794.68 753.03,798.78 753.53,802.83 754.03,806.83 754.52,810.76 755.02,814.62 755.52,818.41 756.01,822.10 756.51,825.71 757.01,829.22 757.50,832.62 758.00,835.92 758.50,839.10 758.99,842.16 759.49,845.09 759.99,847.89 760.48,850.56 760.98,853.08 761.48,855.46 761.97,857.69 762.47,859.76 762.97,861.68 763.46,863.44 763.96,865.03 764.46,866.46 764.95,867.71 765.45,868.80 765.95,869.71 766.44,870.45 766.94,871.01 767.44,871.40 767.93,871.61 768.43,871.64 768.93,871.49 769.42,871.16 769.92,870.66 770.42,869.98 770.91,869.12 771.41,868.09 771.91,866.89 772.40,865.52 772.90,863.98 773.40,862.28 773.89,860.41 774.39,858.39 774.88,856.21 775.38,853.88 775.88,851.40 776.37,848.79 776.87,846.03 777.37,843.14 777.86,840.12 778.36,836.98 778.86,833.72 779.35,830.35 779.85,826.88 780.35,823.30 780.84,819.63 781.34,815.88 781.84,812.04 782.33,808.13 782.83,804.15 783.33,800.12 783.82,796.03 784.32,791.90 784.82,787.72 785.31,783.52 785.81,779.29 786.31,775.05 786.80,770.80 787.30,766.55" fill="none" stroke="#48c848" stroke-width="1.2"/></g><text transform="translate(212.56,387.50) scale(0.9888,1)" font-family="Liberation Sans" font-size="11.5" font-weight="bold" fill="#e02020" >Ic(Q4)</text><text transform="translate(396.87,644.80) scale(1.0215,1)" font-family="Liberation Sans" font-size="11.5" font-weight="bold" fill="#20d020" >V(out)</text></svg><svg width="1618" height="938" style="left:0;top:0;"><defs><clipPath id="scc"><rect x="818" y="120" width="790" height="793"/></clipPath></defs><g clip-path="url(#scc)"><polyline points="943.5,199.0 1494.5,199.0" fill="none" stroke="#0000ff" stroke-width="2.0" stroke-linecap="square"/><polyline points="943.5,199.0 943.5,401.0" fill="none" stroke="#0000ff" stroke-width="2.0" stroke-linecap="square"/><polyline points="943.5,466.5 943.5,777.5" fill="none" stroke="#0000ff" stroke-width="2.0" stroke-linecap="square"/><polyline points="943.5,842.8 943.5,857.0 1427.5,857.0" fill="none" stroke="#0000ff" stroke-width="2.0" stroke-linecap="square"/><polyline points="956.4,723.0 943.5,723.0" fill="none" stroke="#0000ff" stroke-width="2.0" stroke-linecap="square"/><polyline points="1010.5,723.0 1023.6,723.0" fill="none" stroke="#0000ff" stroke-width="2.0" stroke-linecap="square"/><polyline points="1023.6,332.0 1023.6,347.6" fill="none" stroke="#0000ff" stroke-width="2.0" stroke-linecap="square"/><polyline points="1023.6,412.9 1023.6,602.4" fill="none" stroke="#0000ff" stroke-width="2.0" stroke-linecap="square"/><polyline points="1023.6,683.0 1023.6,777.5" fill="none" stroke="#0000ff" stroke-width="2.0" stroke-linecap="square"/><polyline points="1023.6,842.8 1023.6,857.0" fill="none" stroke="#0000ff" stroke-width="2.0" stroke-linecap="square"/><polyline points="1023.6,521.4 1051.0,521.4" fill="none" stroke="#0000ff" stroke-width="2.0" stroke-linecap="square"/><polyline points="1117.5,521.4 1440.7,521.4" fill="none" stroke="#0000ff" stroke-width="2.0" stroke-linecap="square"/><polyline points="1212.5,266.3 1144.4,266.3 1144.4,401.5" fill="none" stroke="#0000ff" stroke-width="2.0" stroke-linecap="square"/><polyline points="1144.4,453.7 1144.4,521.4" fill="none" stroke="#0000ff" stroke-width="2.0" stroke-linecap="square"/><polyline points="1212.5,266.3 1212.5,280.0" fill="none" stroke="#0000ff" stroke-width="2.0" stroke-linecap="square"/><polyline points="1212.5,347.0 1212.5,455.2" fill="none" stroke="#0000ff" stroke-width="2.0" stroke-linecap="square"/><polyline points="1212.5,507.9 1212.5,549.5" fill="none" stroke="#0000ff" stroke-width="2.0" stroke-linecap="square"/><polyline points="1212.5,615.0 1212.5,723.4" fill="none" stroke="#0000ff" stroke-width="2.0" stroke-linecap="square"/><polyline points="1212.5,360.3 1280.0,360.3" fill="none" stroke="#0000ff" stroke-width="2.0" stroke-linecap="square"/><polyline points="1212.5,696.4 1280.0,696.4" fill="none" stroke="#0000ff" stroke-width="2.0" stroke-linecap="square"/><polyline points="1023.6,763.5 1158.5,763.5" fill="none" stroke="#0000ff" stroke-width="2.0" stroke-linecap="square"/><polyline points="1212.5,803.0 1212.5,857.0" fill="none" stroke="#0000ff" stroke-width="2.0" stroke-linecap="square"/><polyline points="1332.7,199.0 1332.7,321.0" fill="none" stroke="#0000ff" stroke-width="2.0" stroke-linecap="square"/><polyline points="1332.7,400.0 1332.7,441.0" fill="none" stroke="#0000ff" stroke-width="2.0" stroke-linecap="square"/><polyline points="1332.7,507.0 1332.7,561.5" fill="none" stroke="#0000ff" stroke-width="2.0" stroke-linecap="square"/><polyline points="1332.7,628.0 1332.7,656.5" fill="none" stroke="#0000ff" stroke-width="2.0" stroke-linecap="square"/><polyline points="1332.7,735.8 1332.7,777.5" fill="none" stroke="#0000ff" stroke-width="2.0" stroke-linecap="square"/><polyline points="1332.7,842.8 1332.7,857.0" fill="none" stroke="#0000ff" stroke-width="2.0" stroke-linecap="square"/><polyline points="1332.7,427.6 1373.7,427.6" fill="none" stroke="#0000ff" stroke-width="2.0" stroke-linecap="square"/><polyline points="1332.7,750.3 1373.7,750.3" fill="none" stroke="#0000ff" stroke-width="2.0" stroke-linecap="square"/><polyline points="1427.5,199.0 1427.5,388.0" fill="none" stroke="#0000ff" stroke-width="2.0" stroke-linecap="square"/><polyline points="1427.5,467.5 1427.5,710.3" fill="none" stroke="#0000ff" stroke-width="2.0" stroke-linecap="square"/><polyline points="1427.5,790.0 1427.5,857.0" fill="none" stroke="#0000ff" stroke-width="2.0" stroke-linecap="square"/><polyline points="1493.5,521.4 1547.5,521.4" fill="none" stroke="#0000ff" stroke-width="2.0" stroke-linecap="square"/><polyline points="943.5,642.2 971.0,642.2" fill="none" stroke="#0000ff" stroke-width="2.0" stroke-linecap="square"/><polyline points="943.5,642.2 862.4,642.2 862.4,657.2" fill="none" stroke="#0000ff" stroke-width="2.0" stroke-linecap="square"/><polyline points="862.4,708.7 862.4,770.1" fill="none" stroke="#0000ff" stroke-width="2.0" stroke-linecap="square"/><polyline points="1494.50,199.00 1494.50,206.00" fill="none" stroke="#000000" stroke-width="2.0" stroke-linejoin="miter"/><circle cx="1494.5" cy="232.5" r="26.5" fill="none" stroke="#000000" stroke-width="2"/><polyline points="1487.50,215.80 1501.50,215.80" fill="none" stroke="#000000" stroke-width="2.0" stroke-linejoin="miter"/><polyline points="1494.50,208.50 1494.50,223.00" fill="none" stroke="#000000" stroke-width="2.0" stroke-linejoin="miter"/><polyline points="1487.50,249.50 1501.50,249.50" fill="none" stroke="#000000" stroke-width="2.0" stroke-linejoin="miter"/><polyline points="1494.50,259.00 1494.50,266.00" fill="none" stroke="#000000" stroke-width="2.0" stroke-linejoin="miter"/><polygon points="1479.5,266.0 1509.5,266.0 1494.5,281.5" fill="none" stroke="#0000ff" stroke-width="2" stroke-linejoin="miter"/><polyline points="1212.50,199.00 1212.50,205.73 1225.80,212.46 1199.20,225.92 1225.80,239.38 1199.20,252.84 1212.50,259.57 1212.50,266.30" fill="none" stroke="#000000" stroke-width="2.0" stroke-linejoin="miter"/><polyline points="1212.50,280.00 1212.50,286.70 1225.80,293.40 1199.20,306.80 1225.80,320.20 1199.20,333.60 1212.50,340.30 1212.50,347.00" fill="none" stroke="#000000" stroke-width="2.0" stroke-linejoin="miter"/><polyline points="1023.60,347.60 1023.60,354.13 1036.90,360.66 1010.30,373.72 1036.90,386.78 1010.30,399.84 1023.60,406.37 1023.60,412.90" fill="none" stroke="#000000" stroke-width="2.0" stroke-linejoin="miter"/><polyline points="943.50,401.00 943.50,407.55 956.80,414.10 930.20,427.20 956.80,440.30 930.20,453.40 943.50,459.95 943.50,466.50" fill="none" stroke="#000000" stroke-width="2.0" stroke-linejoin="miter"/><polygon points="1008.6,279 1038.6,279 1023.6,264.5" fill="none" stroke="#0000ff" stroke-width="2"/><polyline points="1023.60,332.50 1023.60,309.09" fill="none" stroke="#000000" stroke-width="2.0" stroke-linejoin="miter"/><polyline points="1010.10,309.09 1037.10,309.09" fill="none" stroke="#000000" stroke-width="2.0" stroke-linejoin="miter"/><polyline points="1010.60,298.57 1016.10,301.57 1031.10,301.57 1036.60,298.57" fill="none" stroke="#000000" stroke-width="2.0" stroke-linejoin="miter"/><polyline points="1023.60,301.57 1023.60,279.00" fill="none" stroke="#000000" stroke-width="2.0" stroke-linejoin="miter"/><polyline points="1027.10,320.20 1034.10,320.20" fill="none" stroke="#000000" stroke-width="1.5" stroke-linejoin="miter"/><polyline points="1030.60,316.50 1030.60,324.00" fill="none" stroke="#000000" stroke-width="1.5" stroke-linejoin="miter"/><polyline points="1144.40,401.50 1144.40,424.34" fill="none" stroke="#000000" stroke-width="2.0" stroke-linejoin="miter"/><polyline points="1130.90,424.34 1157.90,424.34" fill="none" stroke="#000000" stroke-width="2.0" stroke-linejoin="miter"/><polyline points="1131.40,434.68 1136.90,431.68 1151.90,431.68 1157.40,434.68" fill="none" stroke="#000000" stroke-width="2.0" stroke-linejoin="miter"/><polyline points="1144.40,431.68 1144.40,453.70" fill="none" stroke="#000000" stroke-width="2.0" stroke-linejoin="miter"/><polyline points="1134.90,414.96 1141.90,414.96" fill="none" stroke="#000000" stroke-width="1.5" stroke-linejoin="miter"/><polyline points="1138.40,411.70 1138.40,418.22" fill="none" stroke="#000000" stroke-width="1.5" stroke-linejoin="miter"/><polyline points="1051.00,521.40 1057.65,521.40 1064.30,508.10 1077.60,534.70 1090.90,508.10 1104.20,534.70 1110.85,521.40 1117.50,521.40" fill="none" stroke="#000000" stroke-width="2.0" stroke-linejoin="miter"/><polyline points="1212.50,455.20 1212.50,471.67" fill="none" stroke="#000000" stroke-width="2.0" stroke-linejoin="miter"/><polygon points="1199.5,471.66875 1225.5,471.66875 1212.5,491.43125" fill="none" stroke="#000000" stroke-width="2"/><polyline points="1199.50,491.43 1225.50,491.43" fill="none" stroke="#000000" stroke-width="2.0" stroke-linejoin="miter"/><polyline points="1212.50,491.43 1212.50,507.90" fill="none" stroke="#000000" stroke-width="2.0" stroke-linejoin="miter"/><polyline points="1212.50,549.50 1212.50,556.05 1225.80,562.60 1199.20,575.70 1225.80,588.80 1199.20,601.90 1212.50,608.45 1212.50,615.00" fill="none" stroke="#000000" stroke-width="2.0" stroke-linejoin="miter"/><polyline points="1293.00,333.30 1293.00,387.30" fill="none" stroke="#000000" stroke-width="2.0" stroke-linejoin="miter"/><polyline points="1280.00,360.30 1293.00,360.30" fill="none" stroke="#000000" stroke-width="2.0" stroke-linejoin="miter"/><polyline points="1293.00,347.30 1333.00,321.30" fill="none" stroke="#000000" stroke-width="2.0" stroke-linejoin="miter"/><polyline points="1293.00,374.30 1333.00,400.30" fill="none" stroke="#000000" stroke-width="2.0" stroke-linejoin="miter"/><polygon points="1310.0,392.3 1318.0,384.8 1333.0,400.3" fill="#f0f0ec" stroke="#000000" stroke-width="1.6" stroke-linejoin="miter"/><polyline points="1386.60,400.60 1386.60,454.60" fill="none" stroke="#000000" stroke-width="2.0" stroke-linejoin="miter"/><polyline points="1373.60,427.60 1386.60,427.60" fill="none" stroke="#000000" stroke-width="2.0" stroke-linejoin="miter"/><polyline points="1386.60,414.60 1426.60,388.60" fill="none" stroke="#000000" stroke-width="2.0" stroke-linejoin="miter"/><polyline points="1386.60,441.60 1426.60,467.60" fill="none" stroke="#000000" stroke-width="2.0" stroke-linejoin="miter"/><polygon points="1403.6,459.6 1411.6,452.1 1426.6,467.6" fill="#f0f0ec" stroke="#000000" stroke-width="1.6" stroke-linejoin="miter"/><polyline points="1332.70,441.00 1332.70,447.60 1346.00,454.20 1319.40,467.40 1346.00,480.60 1319.40,493.80 1332.70,500.40 1332.70,507.00" fill="none" stroke="#000000" stroke-width="2.0" stroke-linejoin="miter"/><polyline points="1332.70,561.50 1332.70,568.15 1346.00,574.80 1319.40,588.10 1346.00,601.40 1319.40,614.70 1332.70,621.35 1332.70,628.00" fill="none" stroke="#000000" stroke-width="2.0" stroke-linejoin="miter"/><polyline points="1440.70,521.40 1463.80,521.40" fill="none" stroke="#000000" stroke-width="2.0" stroke-linejoin="miter"/><polyline points="1463.80,507.90 1463.80,534.90" fill="none" stroke="#000000" stroke-width="2.0" stroke-linejoin="miter"/><polyline points="1474.22,508.40 1471.22,513.90 1471.22,528.90 1474.22,534.40" fill="none" stroke="#000000" stroke-width="2.0" stroke-linejoin="miter"/><polyline points="1471.22,521.40 1493.50,521.40" fill="none" stroke="#000000" stroke-width="2.0" stroke-linejoin="miter"/><polyline points="1450.20,515.40 1457.20,515.40" fill="none" stroke="#000000" stroke-width="1.5" stroke-linejoin="miter"/><polyline points="1453.70,511.90 1453.70,518.90" fill="none" stroke="#000000" stroke-width="1.5" stroke-linejoin="miter"/><polyline points="1547.50,521.40 1547.50,528.09 1560.80,534.78 1534.20,548.16 1560.80,561.54 1534.20,574.92 1547.50,581.61 1547.50,588.30" fill="none" stroke="#000000" stroke-width="2.0" stroke-linejoin="miter"/><polygon points="1532.5,588.3 1562.5,588.3 1547.5,603.8" fill="none" stroke="#0000ff" stroke-width="2" stroke-linejoin="miter"/><polyline points="983.40,615.20 983.40,669.20" fill="none" stroke="#000000" stroke-width="2.0" stroke-linejoin="miter"/><polyline points="970.40,642.20 983.40,642.20" fill="none" stroke="#000000" stroke-width="2.0" stroke-linejoin="miter"/><polyline points="983.40,629.20 1023.40,602.20" fill="none" stroke="#000000" stroke-width="2.0" stroke-linejoin="miter"/><polyline points="983.40,656.20 1023.40,682.20" fill="none" stroke="#000000" stroke-width="2.0" stroke-linejoin="miter"/><polygon points="983.4,629.2 1007.4,620.2 1000.9,612.7" fill="#f0f0ec" stroke="#000000" stroke-width="1.6" stroke-linejoin="miter"/><polyline points="862.40,657.20 862.40,679.73" fill="none" stroke="#000000" stroke-width="2.0" stroke-linejoin="miter"/><polyline points="862.40,686.17 862.40,708.70" fill="none" stroke="#000000" stroke-width="2.0" stroke-linejoin="miter"/><polyline points="848.40,679.73 876.40,679.73" fill="none" stroke="#000000" stroke-width="2.0" stroke-linejoin="miter"/><polyline points="848.40,686.17 876.40,686.17" fill="none" stroke="#000000" stroke-width="2.0" stroke-linejoin="miter"/><circle cx="862.6" cy="796.6" r="26.5" fill="none" stroke="#000000" stroke-width="2"/><polyline points="855.60,779.90 869.60,779.90" fill="none" stroke="#000000" stroke-width="2.0" stroke-linejoin="miter"/><polyline points="862.60,772.60 862.60,787.10" fill="none" stroke="#000000" stroke-width="2.0" stroke-linejoin="miter"/><polyline points="855.60,813.60 869.60,813.60" fill="none" stroke="#000000" stroke-width="2.0" stroke-linejoin="miter"/><polyline points="862.60,823.10 862.60,830.20" fill="none" stroke="#000000" stroke-width="2.0" stroke-linejoin="miter"/><polygon points="847.6,830.2 877.6,830.2 862.6,845.7" fill="none" stroke="#0000ff" stroke-width="2" stroke-linejoin="miter"/><polyline points="943.50,777.50 943.50,784.03 956.80,790.56 930.20,803.62 956.80,816.68 930.20,829.74 943.50,836.27 943.50,842.80" fill="none" stroke="#000000" stroke-width="2.0" stroke-linejoin="miter"/><polyline points="1023.60,777.50 1023.60,784.03 1036.90,790.56 1010.30,803.62 1036.90,816.68 1010.30,829.74 1023.60,836.27 1023.60,842.80" fill="none" stroke="#000000" stroke-width="2.0" stroke-linejoin="miter"/><polyline points="1332.70,777.50 1332.70,784.03 1346.00,790.56 1319.40,803.62 1346.00,816.68 1319.40,829.74 1332.70,836.27 1332.70,842.80" fill="none" stroke="#000000" stroke-width="2.0" stroke-linejoin="miter"/><polyline points="1171.40,735.80 1171.40,789.80" fill="none" stroke="#000000" stroke-width="2.0" stroke-linejoin="miter"/><polyline points="1158.40,762.80 1171.40,762.80" fill="none" stroke="#000000" stroke-width="2.0" stroke-linejoin="miter"/><polyline points="1171.40,749.80 1211.40,723.80" fill="none" stroke="#000000" stroke-width="2.0" stroke-linejoin="miter"/><polyline points="1171.40,776.80 1211.40,802.80" fill="none" stroke="#000000" stroke-width="2.0" stroke-linejoin="miter"/><polygon points="1188.4,794.8 1196.4,787.3 1211.4,802.8" fill="#f0f0ec" stroke="#000000" stroke-width="1.6" stroke-linejoin="miter"/><polyline points="1292.60,669.40 1292.60,723.40" fill="none" stroke="#000000" stroke-width="2.0" stroke-linejoin="miter"/><polyline points="1279.60,696.40 1292.60,696.40" fill="none" stroke="#000000" stroke-width="2.0" stroke-linejoin="miter"/><polyline points="1292.60,683.40 1332.60,656.40" fill="none" stroke="#000000" stroke-width="2.0" stroke-linejoin="miter"/><polyline points="1292.60,710.40 1332.60,736.40" fill="none" stroke="#000000" stroke-width="2.0" stroke-linejoin="miter"/><polygon points="1292.6,683.4 1316.6,674.4 1310.1,666.9" fill="#f0f0ec" stroke="#000000" stroke-width="1.6" stroke-linejoin="miter"/><polyline points="1386.50,723.20 1386.50,777.20" fill="none" stroke="#000000" stroke-width="2.0" stroke-linejoin="miter"/><polyline points="1373.50,750.20 1386.50,750.20" fill="none" stroke="#000000" stroke-width="2.0" stroke-linejoin="miter"/><polyline points="1386.50,737.20 1426.50,711.20" fill="none" stroke="#000000" stroke-width="2.0" stroke-linejoin="miter"/><polyline points="1386.50,764.20 1426.50,790.20" fill="none" stroke="#000000" stroke-width="2.0" stroke-linejoin="miter"/><polygon points="1403.5,782.2 1411.5,774.7 1426.5,790.2" fill="#f0f0ec" stroke="#000000" stroke-width="1.6" stroke-linejoin="miter"/><polygon points="1412.5,857.5 1442.5,857.5 1427.5,873.0" fill="none" stroke="#0000ff" stroke-width="2" stroke-linejoin="miter"/><rect x="1207.0" y="193.5" width="11" height="11" fill="#0000ff"/><rect x="1327.2" y="193.5" width="11" height="11" fill="#0000ff"/><rect x="1422.0" y="193.5" width="11" height="11" fill="#0000ff"/><rect x="1207.0" y="260.8" width="11" height="11" fill="#0000ff"/><rect x="1207.0" y="354.8" width="11" height="11" fill="#0000ff"/><rect x="1327.2" y="422.1" width="11" height="11" fill="#0000ff"/><rect x="1018.1" y="515.9" width="11" height="11" fill="#0000ff"/><rect x="1138.9" y="515.9" width="11" height="11" fill="#0000ff"/><rect x="1327.2" y="515.9" width="11" height="11" fill="#0000ff"/><rect x="1422.0" y="515.9" width="11" height="11" fill="#0000ff"/><rect x="938.0" y="636.7" width="11" height="11" fill="#0000ff"/><rect x="938.0" y="717.5" width="11" height="11" fill="#0000ff"/><rect x="1018.1" y="717.5" width="11" height="11" fill="#0000ff"/><rect x="1018.1" y="758.0" width="11" height="11" fill="#0000ff"/><rect x="1207.0" y="690.9" width="11" height="11" fill="#0000ff"/><rect x="1327.2" y="744.8" width="11" height="11" fill="#0000ff"/><rect x="1018.1" y="851.5" width="11" height="11" fill="#0000ff"/><rect x="1207.0" y="851.5" width="11" height="11" fill="#0000ff"/><rect x="1327.2" y="851.5" width="11" height="11" fill="#0000ff"/><text transform="translate(1228.67,227.70) scale(1.0667,1)" font-family="Liberation Sans" font-size="19.5" font-weight="bold" fill="#006a14" stroke="#006a14" stroke-width="0.35">R5</text><text transform="translate(1228.68,258.70) scale(1.0537,1)" font-family="Liberation Sans" font-size="19.5" font-weight="bold" fill="#006a14" stroke="#006a14" stroke-width="0.35">1k</text><text transform="translate(1228.67,308.70) scale(1.0652,1)" font-family="Liberation Sans" font-size="19.5" font-weight="bold" fill="#006a14" stroke="#006a14" stroke-width="0.35">R6</text><text transform="translate(1228.64,338.30) scale(1.0883,1)" font-family="Liberation Sans" font-size="19.5" font-weight="bold" fill="#006a14" stroke="#006a14" stroke-width="0.35">1k5</text><text transform="translate(1040.55,375.20) scale(1.0811,1)" font-family="Liberation Sans" font-size="19.5" font-weight="bold" fill="#006a14" stroke="#006a14" stroke-width="0.35">R8</text><text transform="translate(1041.06,404.90) scale(1.1220,1)" font-family="Liberation Sans" font-size="19.5" font-weight="bold" fill="#006a14" stroke="#006a14" stroke-width="0.35">75</text><text transform="translate(960.00,428.50) scale(1.0435,1)" font-family="Liberation Sans" font-size="19.5" font-weight="bold" fill="#006a14" stroke="#006a14" stroke-width="0.35">R9</text><text transform="translate(959.92,459.30) scale(1.1062,1)" font-family="Liberation Sans" font-size="19.5" font-weight="bold" fill="#006a14" stroke="#006a14" stroke-width="0.35">120k</text><text transform="translate(983.22,296.10) scale(1.0340,1)" font-family="Liberation Sans" font-size="19.5" font-weight="bold" fill="#006a14" stroke="#006a14" stroke-width="0.35">C2</text><text transform="translate(969.21,334.50) scale(1.1059,1)" font-family="Liberation Sans" font-size="19.5" font-weight="bold" fill="#006a14" stroke="#006a14" stroke-width="0.35">200μ</text><text transform="translate(1151.34,415.30) scale(1.0105,1)" font-family="Liberation Sans" font-size="19.5" font-weight="bold" fill="#006a14" stroke="#006a14" stroke-width="0.35">C1</text><text transform="translate(1151.30,456.10) scale(1.1224,1)" font-family="Liberation Sans" font-size="19.5" font-weight="bold" fill="#006a14" stroke="#006a14" stroke-width="0.35">100μ</text><text transform="translate(1217.91,462.30) scale(1.1130,1)" font-family="Liberation Sans" font-size="19.5" font-weight="bold" fill="#006a14" stroke="#006a14" stroke-width="0.35">D2</text><text transform="translate(1217.85,516.00) scale(1.1583,1)" font-family="Liberation Sans" font-size="19.5" font-weight="bold" fill="#006a14" stroke="#006a14" stroke-width="0.35">D</text><text transform="translate(1070.94,504.00) scale(1.0885,1)" font-family="Liberation Sans" font-size="19.5" font-weight="bold" fill="#006a14" stroke="#006a14" stroke-width="0.35">R7</text><text transform="translate(1066.22,553.90) scale(1.1057,1)" font-family="Liberation Sans" font-size="19.5" font-weight="bold" fill="#006a14" stroke="#006a14" stroke-width="0.35">1k8</text><text transform="translate(1228.63,576.40) scale(1.0933,1)" font-family="Liberation Sans" font-size="19.5" font-weight="bold" fill="#006a14" stroke="#006a14" stroke-width="0.35">R12</text><text transform="translate(1229.32,606.70) scale(1.0857,1)" font-family="Liberation Sans" font-size="19.5" font-weight="bold" fill="#006a14" stroke="#006a14" stroke-width="0.35">24</text><text transform="translate(1349.08,469.30) scale(1.0581,1)" font-family="Liberation Sans" font-size="19.5" font-weight="bold" fill="#006a14" stroke="#006a14" stroke-width="0.35">R1</text><text transform="translate(1348.96,499.30) scale(1.1494,1)" font-family="Liberation Sans" font-size="19.5" font-weight="bold" fill="#006a14" stroke="#006a14" stroke-width="0.35">100</text><text transform="translate(1349.04,589.70) scale(1.0913,1)" font-family="Liberation Sans" font-size="19.5" font-weight="bold" fill="#006a14" stroke="#006a14" stroke-width="0.35">R3</text><text transform="translate(1349.99,619.40) scale(1.1055,1)" font-family="Liberation Sans" font-size="19.5" font-weight="bold" fill="#006a14" stroke="#006a14" stroke-width="0.35">33</text><text transform="translate(1325.61,349.50) scale(1.0490,1)" font-family="Liberation Sans" font-size="19.5" font-weight="bold" fill="#006a14" stroke="#006a14" stroke-width="0.35">Q2</text><text transform="translate(1308.13,374.50) scale(1.0286,1)" font-family="Liberation Sans" font-size="19.5" font-weight="bold" fill="#006a14" stroke="#006a14" stroke-width="0.35">GT404V</text><text transform="translate(1420.74,422.30) scale(1.0149,1)" font-family="Liberation Sans" font-size="19.5" font-weight="bold" fill="#006a14" stroke="#006a14" stroke-width="0.35">Q4</text><text transform="translate(1420.22,453.20) scale(1.0269,1)" font-family="Liberation Sans" font-size="19.5" font-weight="bold" fill="#006a14" stroke="#006a14" stroke-width="0.35">KT805BM</text><text transform="translate(1514.47,207.60) scale(1.0409,1)" font-family="Liberation Sans" font-size="19.5" font-weight="bold" fill="#006a14" stroke="#006a14" stroke-width="0.35">V1</text><text transform="translate(1514.18,274.40) scale(1.1325,1)" font-family="Liberation Sans" font-size="19.5" font-weight="bold" fill="#006a14" stroke="#006a14" stroke-width="0.35">38</text><text transform="translate(1454.04,504.00) scale(1.0197,1)" font-family="Liberation Sans" font-size="19.5" font-weight="bold" fill="#006a14" stroke="#006a14" stroke-width="0.35">C4</text><text transform="translate(1436.50,555.20) scale(1.1204,1)" font-family="Liberation Sans" font-size="19.5" font-weight="bold" fill="#006a14" stroke="#006a14" stroke-width="0.35">1000μ</text><text transform="translate(1563.63,549.10) scale(1.0921,1)" font-family="Liberation Sans" font-size="19.5" font-weight="bold" fill="#006a14" stroke="#006a14" stroke-width="0.35">R4</text><text transform="translate(1564.72,580.30) scale(1.1143,1)" font-family="Liberation Sans" font-size="19.5" font-weight="bold" fill="#006a14" stroke="#006a14" stroke-width="0.35">4</text><text transform="translate(1041.32,634.00) scale(1.0256,1)" font-family="Liberation Sans" font-size="19.5" font-weight="bold" fill="#006a14" stroke="#006a14" stroke-width="0.35">MP40A</text><text transform="translate(1041.81,664.00) scale(1.0490,1)" font-family="Liberation Sans" font-size="19.5" font-weight="bold" fill="#006a14" stroke="#006a14" stroke-width="0.35">Q6</text><text transform="translate(869.43,670.20) scale(1.0213,1)" font-family="Liberation Sans" font-size="19.5" font-weight="bold" fill="#006a14" stroke="#006a14" stroke-width="0.35">C3</text><text transform="translate(869.50,711.70) scale(1.1257,1)" font-family="Liberation Sans" font-size="19.5" font-weight="bold" fill="#006a14" stroke="#006a14" stroke-width="0.35">5μ</text><text transform="translate(882.87,771.40) scale(1.0652,1)" font-family="Liberation Sans" font-size="19.5" font-weight="bold" fill="#006a14" stroke="#006a14" stroke-width="0.35">V3</text><text transform="translate(955.85,813.20) scale(1.0815,1)" font-family="Liberation Sans" font-size="19.5" font-weight="bold" fill="#006a14" stroke="#006a14" stroke-width="0.35">R10</text><text transform="translate(950.62,840.10) scale(1.1015,1)" font-family="Liberation Sans" font-size="19.5" font-weight="bold" fill="#006a14" stroke="#006a14" stroke-width="0.35">100k</text><text transform="translate(1040.22,805.00) scale(1.1061,1)" font-family="Liberation Sans" font-size="19.5" font-weight="bold" fill="#006a14" stroke="#006a14" stroke-width="0.35">R11</text><text transform="translate(1041.33,834.70) scale(1.0952,1)" font-family="Liberation Sans" font-size="19.5" font-weight="bold" fill="#006a14" stroke="#006a14" stroke-width="0.35">4k7</text><text transform="translate(1130.69,724.10) scale(1.0505,1)" font-family="Liberation Sans" font-size="19.5" font-weight="bold" fill="#006a14" stroke="#006a14" stroke-width="0.35">P307A</text><text transform="translate(1186.41,763.30) scale(1.0490,1)" font-family="Liberation Sans" font-size="19.5" font-weight="bold" fill="#006a14" stroke="#006a14" stroke-width="0.35">Q3</text><text transform="translate(1322.53,687.30) scale(1.0207,1)" font-family="Liberation Sans" font-size="19.5" font-weight="bold" fill="#006a14" stroke="#006a14" stroke-width="0.35">GT402A</text><text transform="translate(1313.21,714.20) scale(1.0505,1)" font-family="Liberation Sans" font-size="19.5" font-weight="bold" fill="#006a14" stroke="#006a14" stroke-width="0.35">Q5</text><text transform="translate(1350.17,805.00) scale(1.0652,1)" font-family="Liberation Sans" font-size="19.5" font-weight="bold" fill="#006a14" stroke="#006a14" stroke-width="0.35">R2</text><text transform="translate(1350.10,835.70) scale(1.1200,1)" font-family="Liberation Sans" font-size="19.5" font-weight="bold" fill="#006a14" stroke="#006a14" stroke-width="0.35">100</text><text transform="translate(1420.44,744.00) scale(1.0182,1)" font-family="Liberation Sans" font-size="19.5" font-weight="bold" fill="#006a14" stroke="#006a14" stroke-width="0.35">Q1</text><text transform="translate(1419.90,775.00) scale(1.0373,1)" font-family="Liberation Sans" font-size="19.5" font-weight="bold" fill="#006a14" stroke="#006a14" stroke-width="0.35">KT805BM</text><text transform="translate(838.64,901.50) scale(1.1137,1)" font-family="Liberation Sans" font-size="19.5" font-weight="bold" fill="#006a14" stroke="#006a14" stroke-width="0.35">SINE(0 0.4 1k)</text><text transform="translate(892.13,638.40) scale(1.1390,1)" font-family="Liberation Sans" font-size="19.5" font-weight="bold" fill="#a80000" stroke="#a80000" stroke-width="0.35">in</text><text transform="translate(1490.39,516.90) scale(1.0791,1)" font-family="Liberation Sans" font-size="19.5" font-weight="bold" fill="#a80000" stroke="#a80000" stroke-width="0.35">out</text><text transform="translate(908.34,152.80) scale(1.0582,1)" font-family="Liberation Sans" font-size="20" font-weight="bold" fill="#f07820" >.tran 0 50m 40m 5u</text><text transform="translate(1298.32,146.80) scale(1.0732,1)" font-family="Liberation Sans" font-size="20" font-weight="bold" fill="#f07820" >.four 1000 v (out)</text></g></svg><div class="a" style="left:332px;top:90px;width:555px;height:319px;background:#fff;border:1px solid #4fb0c0;box-sizing:border-box;box-shadow:1px 3px 14px rgba(0,0,0,0.28)"></div><div class="a" style="left:332px;top:90px;width:555px;height:27px;background:#00b4c6"></div><div class="a" style="left:333px;top:117px;width:1px;height:291px;background:#e8f0f2"></div><div class="a" style="left:884px;top:117px;width:2px;height:291px;background:#f0f0f0"></div><div class="a" style="left:333px;top:406px;width:553px;height:2px;background:#f0f0f0"></div><div class="a" style="left:869px;top:118px;width:15px;height:274px;background:#f0f0f0"></div><div class="a" style="left:871px;top:235px;width:12px;height:73px;background:#cdcdcd"></div><div class="a" style="left:334px;top:392px;width:550px;height:14px;background:#f0f0f0"></div><div class="a" style="left:349px;top:392px;width:166px;height:14px;background:#cdcdcd"></div><svg width="1618" height="938" style="left:0;top:0;"><text transform="translate(357.65,106.70) scale(0.9047,1)" font-family="Liberation Sans" font-size="11" font-weight="normal" fill="#001820" >SPICE Error Log: E:\ВАЖНОЕ\СХЕМЫ\Мелодия 103.log</text><g transform="translate(339,96.2) scale(1.0)"><path d="M0.3 0.3 V13.5 L10.5 6.5" fill="none" stroke="#151515" stroke-width="1.3"/><path d="M1.2 1 H3.6 L2.9 4.6 H6.2 L5.7 6.5 H1 L1.8 3.3 Z" fill="#a01010"/><path d="M6.2 0.6 H13 L12.5 2.4 H10.7 L9.2 7 H7.1 L8.6 2.4 H6.6 Z" fill="#a01010"/><path d="M0.5 0.5 L2.5 2.2 M10 6 L12.6 1" stroke="#151515" stroke-width="1"/></g>
<path d="M867 98 L877 108 M877 98 L867 108" stroke="#111" stroke-width="1.1"/>
<path d="M873.5 128.5 L877 125 L880.5 128.5" fill="none" stroke="#555" stroke-width="1.5"/>
<path d="M873.5 382 L877 385.5 L880.5 382" fill="none" stroke="#555" stroke-width="1.5"/>
<path d="M344 395.5 L340.5 399 L344 402.5" fill="none" stroke="#555" stroke-width="1.5"/>
<path d="M860 395.5 L863.5 399 L860 402.5" fill="none" stroke="#555" stroke-width="1.5"/>
<g fill="#b0b0b0"><rect x="880" y="397" width="1" height="1"/><rect x="878" y="399" width="1" height="1"/><rect x="880" y="399" width="1" height="1"/><rect x="876" y="401" width="1" height="1"/><rect x="878" y="401" width="1" height="1"/><rect x="880" y="401" width="1" height="1"/></g></svg><div class="a" style="left:335px;top:131px;font-family:'Liberation Mono', monospace;font-size:11.67px;font-weight:bold;line-height:13.95px;white-space:pre;color:#000">N-Period=1
Fourier components of V(out)
DC component:0.00244093












Total Harmonic Distortion: 1.032794%(1.032580%)</div><div class="a" style="left:335px;top:186.8px;font-family:'Liberation Mono', monospace;font-size:11.67px;font-weight:bold;line-height:13.95px;white-space:pre;color:#000">Harmonic
 Number
    1
    2
    3
    4
    5
    6
    7
    8
    9</div><div class="a" style="left:469.8px;top:186.8px;font-family:'Liberation Mono', monospace;font-size:11.67px;font-weight:bold;line-height:13.95px;white-space:pre;color:#000">Frequency
  [Hz]
1.000e+03
2.000e+03
3.000e+03
4.000e+03
5.000e+03
6.000e+03
7.000e+03
8.000e+03
9.000e+03</div><div class="a" style="left:602.8px;top:186.8px;font-family:'Liberation Mono', monospace;font-size:11.67px;font-weight:bold;line-height:13.95px;white-space:pre;color:#000"> Fourier
Component
8.512e+00
1.814e-02
8.094e-02
2.343e-02
1.541e-02
1.669e-03
6.346e-03
2.783e-03
3.260e-03</div><div class="a" style="left:735.8px;top:186.8px;font-family:'Liberation Mono', monospace;font-size:11.67px;font-weight:bold;line-height:13.95px;white-space:pre;color:#000">Normalized
 Component
1.000e+00
2.132e-03
9.509e-03
2.753e-03
1.811e-03
1.960e-04
7.456e-04
3.270e-04
3.830e-04</div><div class="a" style="left:0;top:0;width:1px;height:938px;background:#3a3a3a"></div></body></html>
